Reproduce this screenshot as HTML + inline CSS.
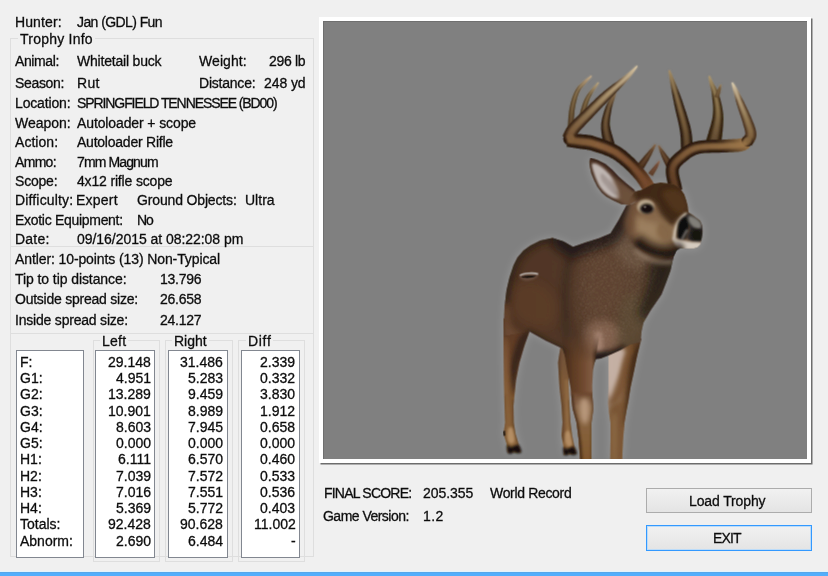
<!DOCTYPE html>
<html lang="en"><head><meta charset="utf-8"><title>Trophy Info</title>
<style>
html,body{margin:0;padding:0;}
body{width:828px;height:576px;overflow:hidden;background:#f0f0f0;font-family:"Liberation Sans",sans-serif;font-size:14px;color:#000;}
#dlg{position:relative;width:828px;height:576px;background:#f0f0f0;overflow:hidden;}
.t{will-change:transform;-webkit-text-stroke:0.3px #151515;position:absolute;white-space:pre;line-height:16px;font-size:14px;color:#0a0a0a;}
.grp{position:absolute;border:1px solid #dedede;box-sizing:border-box;}
.hl{position:absolute;height:1px;background:#dedede;}
.box{position:absolute;background:#fff;border:1px solid #828790;box-sizing:border-box;}
.cap{position:absolute;background:#f0f0f0;}
#frame{position:absolute;left:319px;top:16.5px;width:491.5px;height:446.5px;background:#fff;box-shadow:1.5px 1.5px 0 #6d6d6d;}
#view{position:absolute;left:322.5px;top:20.5px;width:484px;height:438.5px;background:#808080;overflow:hidden;box-shadow:inset 1px 1px 0 #6f6f6f;}
.btn{position:absolute;box-sizing:border-box;border:1px solid #acacac;background:linear-gradient(#f1f1f1,#e4e4e4);}
.btn.def{border-color:#3399ff;box-shadow:inset 0 0 0 1px #bcdcf9;}
#bar{position:absolute;left:0;top:571px;width:828px;height:5px;background:linear-gradient(#e2f3fd 0,#e2f3fd 1px,#56a6ea 1px,#56a6ea 2px,#52aefc 2px);}

</style></head>
<body>
<div id="dlg">
<div class="grp" style="left:10px;top:38px;width:304px;height:519px"></div>
<div class="cap" style="left:18px;top:32px;width:77px;height:14px"></div>
<div class="hl" style="left:11px;top:246px;width:302px"></div>
<div class="hl" style="left:11px;top:333px;width:302px"></div>
<div class="grp" style="left:93px;top:340px;width:67px;height:222px"></div>
<div class="cap" style="left:100px;top:334px;width:28px;height:14px"></div>
<div class="grp" style="left:165px;top:340px;width:68px;height:222px"></div>
<div class="cap" style="left:172px;top:334px;width:37px;height:14px"></div>
<div class="grp" style="left:238px;top:340px;width:67px;height:222px"></div>
<div class="cap" style="left:246px;top:334px;width:27px;height:14px"></div>
<div class="box" style="left:16px;top:350px;width:68px;height:207.5px"></div>
<div class="box" style="left:95px;top:350px;width:60px;height:207.5px"></div>
<div class="box" style="left:168px;top:350px;width:59.5px;height:207.5px"></div>
<div class="box" style="left:241px;top:350px;width:59px;height:207.5px"></div>
<div id="frame"></div>
<div id="view"><svg width="484" height="439" viewBox="322.5 20.5 484 439" style="position:absolute;left:0;top:0">
<defs>
<filter id="b1" filterUnits="userSpaceOnUse" x="322" y="20" width="486" height="441"><feGaussianBlur stdDeviation="1"/></filter>
<filter id="b2" filterUnits="userSpaceOnUse" x="322" y="20" width="486" height="441"><feGaussianBlur stdDeviation="2.2"/></filter>
<filter id="b3" filterUnits="userSpaceOnUse" x="322" y="20" width="486" height="441"><feGaussianBlur stdDeviation="3.2"/></filter>
<filter id="b4" filterUnits="userSpaceOnUse" x="322" y="20" width="486" height="441"><feGaussianBlur stdDeviation="4.5"/></filter>
<filter id="b8" filterUnits="userSpaceOnUse" x="322" y="20" width="486" height="441"><feGaussianBlur stdDeviation="8"/></filter>
<filter id="soft" filterUnits="userSpaceOnUse" x="322" y="20" width="486" height="441"><feGaussianBlur stdDeviation="0.6"/></filter>
<filter id="fur" filterUnits="userSpaceOnUse" x="322" y="20" width="486" height="441"><feTurbulence type="fractalNoise" baseFrequency="0.6" numOctaves="2" seed="4" result="n"/><feColorMatrix in="n" type="matrix" values="0 0 0 0 0.50  0 0 0 0 0.38  0 0 0 0 0.27  1.4 1.4 0 0 -1.3" result="c"/><feGaussianBlur in="SourceAlpha" stdDeviation="7" result="ba"/><feComposite in="c" in2="ba" operator="in"/></filter>
<linearGradient id="g1" gradientUnits="userSpaceOnUse" x1="0" y1="348" x2="0" y2="455"><stop offset="0" stop-color="#6e5038"/><stop offset="0.3" stop-color="#7e5a38"/><stop offset="1" stop-color="#8c643c"/></linearGradient>
<clipPath id="c1"><path d="M560,346 L557.5,362 L559,387 L561,405 L562,422 L561,435 L563,447 L563,454.5 L576,453.5 L574,446 L571.7,435 L570,422 L569,405 L568,380 L568,346Z"/></clipPath>
<linearGradient id="g2" gradientUnits="userSpaceOnUse" x1="0" y1="320" x2="0" y2="450"><stop offset="0" stop-color="#5a3824"/><stop offset="0.3" stop-color="#69442a"/><stop offset="0.6" stop-color="#7c5630"/><stop offset="1" stop-color="#8e683e"/></linearGradient>
<clipPath id="c2"><path d="M503,318 L503,345 L503.5,380 L504,405 L504.7,422 L503,433 L506,443 L507,452.5 L520.5,452 L518,443 L515,433 L513.3,422 L513,405 L515.5,380 L519,362 L524,345 L529,331 L532,318Z"/></clipPath>
<linearGradient id="g3" gradientUnits="userSpaceOnUse" x1="607" y1="0" x2="640" y2="0"><stop offset="0" stop-color="#9a806c"/><stop offset="0.35" stop-color="#8c6a4c"/><stop offset="0.7" stop-color="#74502f"/><stop offset="1" stop-color="#4e3220"/></linearGradient>
<clipPath id="c3"><path d="M608,346 L608,387 L607.5,403 L608.5,412 L610,422 L610,440 L609.7,460 L621.7,460 L622.5,440 L624,422 L626,410 L628,400 L630,387 L633,373 L636.7,355 L641,338Z"/></clipPath>
<linearGradient id="g4" gradientUnits="userSpaceOnUse" x1="503" y1="0" x2="672" y2="0"><stop offset="0" stop-color="#45291a"/><stop offset="0.2" stop-color="#482c1b"/><stop offset="0.4" stop-color="#482e1e"/><stop offset="0.6" stop-color="#4c3220"/><stop offset="0.8" stop-color="#503826"/><stop offset="1" stop-color="#34251a"/></linearGradient>
<clipPath id="c4"><path d="M552,237.5 L563,241 L572.5,246.5 L585,242 L598,238 L610,233 L618,220 L626,205 L650,200 L680,240 L673,256 L670,270 L666,281 L661,294 L650,310 L643,322 L641,331 L640,342 L630,344 L620,349.5 L610,354 L600,358 L595.5,358.5 L591.5,368 L580,370 L568,366 L562,348 L545,340 L529,331 L520,333 L503,336 L504,307 L506,290 L509,277 L513,265 L517,257 L523,250 L530,245 L540,240Z"/></clipPath>
<linearGradient id="mfl" gradientUnits="userSpaceOnUse" x1="0" y1="334" x2="0" y2="362"><stop offset="0" stop-color="#000"/><stop offset="1" stop-color="#fff"/></linearGradient><mask id="mFL" maskUnits="userSpaceOnUse" x="550" y="320" width="60" height="145"><rect x="550" y="320" width="60" height="145" fill="url(#mfl)"/></mask>
<linearGradient id="g5" gradientUnits="userSpaceOnUse" x1="563" y1="0" x2="596" y2="0"><stop offset="0" stop-color="#462a18"/><stop offset="0.3" stop-color="#5e3c24"/><stop offset="0.6" stop-color="#704a30"/><stop offset="0.85" stop-color="#805c42"/><stop offset="1" stop-color="#3e2818"/></linearGradient>
<clipPath id="c5"><path d="M560,330 L563,348 L566.7,370 L570,387 L571,397 L572,408 L576,422 L578,438 L579.7,460 L591,460 L591,438 L591,422 L593,408 L592,397 L591.7,385 L592.5,370 L595,357.5 L600,330Z"/></clipPath>
<linearGradient id="g6" gradientUnits="userSpaceOnUse" x1="0" y1="392" x2="0" y2="460"><stop offset="0" stop-color="#6a462e"/><stop offset="0.2" stop-color="#8a6a4e"/><stop offset="0.6" stop-color="#85603a"/><stop offset="1" stop-color="#80582e"/></linearGradient>
<clipPath id="c6"><path d="M590,157.3 L597,159.5 L605,163.5 L612,169.5 L618,176 L626,183 L634,189.5 L637,198 L629,204.5 L621,203.8 L612.3,199.8 L606,196.3 L601.3,192.3 L596.8,186.3 L593.7,180 L590.8,173 L589.3,166 L588.8,161Z"/></clipPath>
<linearGradient id="g7" gradientUnits="userSpaceOnUse" x1="570" y1="130" x2="591" y2="75.5"><stop offset="0" stop-color="#40301c"/><stop offset="0.7" stop-color="#40301c"/><stop offset="1" stop-color="#c6ae8c"/></linearGradient>
<linearGradient id="g8" gradientUnits="userSpaceOnUse" x1="570" y1="130" x2="591" y2="75.5"><stop offset="0" stop-color="#61482e"/><stop offset="0.5" stop-color="#90764f"/><stop offset="1" stop-color="#c6ae8c"/></linearGradient>
<linearGradient id="g9" gradientUnits="userSpaceOnUse" x1="580" y1="126" x2="598" y2="82"><stop offset="0" stop-color="#40301c"/><stop offset="0.7" stop-color="#40301c"/><stop offset="1" stop-color="#c0aa84"/></linearGradient>
<linearGradient id="g10" gradientUnits="userSpaceOnUse" x1="580" y1="126" x2="598" y2="82"><stop offset="0" stop-color="#61482e"/><stop offset="0.5" stop-color="#90764f"/><stop offset="1" stop-color="#c0aa84"/></linearGradient>
<linearGradient id="g11" gradientUnits="userSpaceOnUse" x1="608.5" y1="144" x2="615" y2="92"><stop offset="0" stop-color="#2a1b10"/><stop offset="0.7" stop-color="#2a1b10"/><stop offset="1" stop-color="#8a7050"/></linearGradient>
<linearGradient id="g12" gradientUnits="userSpaceOnUse" x1="608.5" y1="144" x2="615" y2="92"><stop offset="0" stop-color="#614830"/><stop offset="0.5" stop-color="#7c6140"/><stop offset="1" stop-color="#8a7050"/></linearGradient>
<linearGradient id="g13" gradientUnits="userSpaceOnUse" x1="567" y1="139.5" x2="649" y2="188"><stop offset="0" stop-color="#2c1b10"/><stop offset="0.7" stop-color="#2c1b10"/><stop offset="1" stop-color="#74482c"/></linearGradient>
<linearGradient id="g14" gradientUnits="userSpaceOnUse" x1="567" y1="139.5" x2="649" y2="188"><stop offset="0" stop-color="#805e39"/><stop offset="0.3" stop-color="#90653f"/><stop offset="0.6" stop-color="#825635"/><stop offset="1" stop-color="#74482c"/></linearGradient>
<linearGradient id="g15" gradientUnits="userSpaceOnUse" x1="568" y1="138.5" x2="636.7" y2="65.5"><stop offset="0" stop-color="#3a2618"/><stop offset="0.7" stop-color="#3a2618"/><stop offset="1" stop-color="#dccaa8"/></linearGradient>
<linearGradient id="g16" gradientUnits="userSpaceOnUse" x1="568" y1="138.5" x2="636.7" y2="65.5"><stop offset="0" stop-color="#7b5938"/><stop offset="0.3" stop-color="#907654"/><stop offset="0.6" stop-color="#b49c75"/><stop offset="1" stop-color="#dccaa8"/></linearGradient>
<linearGradient id="g17" gradientUnits="userSpaceOnUse" x1="640" y1="166" x2="655" y2="144"><stop offset="0" stop-color="#3a2416"/><stop offset="0.7" stop-color="#3a2416"/><stop offset="1" stop-color="#8a6a4a"/></linearGradient>
<linearGradient id="g18" gradientUnits="userSpaceOnUse" x1="640" y1="166" x2="655" y2="144"><stop offset="0" stop-color="#543924"/><stop offset="1" stop-color="#8a6a4a"/></linearGradient>
<linearGradient id="g19" gradientUnits="userSpaceOnUse" x1="650" y1="174" x2="659" y2="160.5"><stop offset="0" stop-color="#5a3a28"/><stop offset="0.7" stop-color="#5a3a28"/><stop offset="1" stop-color="#966a52"/></linearGradient>
<linearGradient id="g20" gradientUnits="userSpaceOnUse" x1="650" y1="174" x2="659" y2="160.5"><stop offset="0" stop-color="#61412c"/><stop offset="1" stop-color="#966a52"/></linearGradient>
<linearGradient id="g21" gradientUnits="userSpaceOnUse" x1="670" y1="166" x2="658" y2="145"><stop offset="0" stop-color="#3a2416"/><stop offset="0.7" stop-color="#3a2416"/><stop offset="1" stop-color="#8a6a4a"/></linearGradient>
<linearGradient id="g22" gradientUnits="userSpaceOnUse" x1="670" y1="166" x2="658" y2="145"><stop offset="0" stop-color="#543924"/><stop offset="1" stop-color="#8a6a4a"/></linearGradient>
<linearGradient id="g23" gradientUnits="userSpaceOnUse" x1="686.5" y1="150" x2="668.7" y2="69.7"><stop offset="0" stop-color="#2a1b10"/><stop offset="0.7" stop-color="#2a1b10"/><stop offset="1" stop-color="#a89068"/></linearGradient>
<linearGradient id="g24" gradientUnits="userSpaceOnUse" x1="686.5" y1="150" x2="668.7" y2="69.7"><stop offset="0" stop-color="#61482e"/><stop offset="0.5" stop-color="#876c46"/><stop offset="1" stop-color="#a89068"/></linearGradient>
<linearGradient id="g25" gradientUnits="userSpaceOnUse" x1="713" y1="143" x2="708.7" y2="75.5"><stop offset="0" stop-color="#33220f"/><stop offset="0.7" stop-color="#33220f"/><stop offset="1" stop-color="#b09a70"/></linearGradient>
<linearGradient id="g26" gradientUnits="userSpaceOnUse" x1="713" y1="143" x2="708.7" y2="75.5"><stop offset="0" stop-color="#644c33"/><stop offset="0.5" stop-color="#90784f"/><stop offset="1" stop-color="#b09a70"/></linearGradient>
<linearGradient id="g27" gradientUnits="userSpaceOnUse" x1="716" y1="97" x2="720.3" y2="84"><stop offset="0" stop-color="#5a4028"/><stop offset="0.7" stop-color="#5a4028"/><stop offset="1" stop-color="#a08860"/></linearGradient>
<linearGradient id="g28" gradientUnits="userSpaceOnUse" x1="716" y1="97" x2="720.3" y2="84"><stop offset="0" stop-color="#6e5838"/><stop offset="1" stop-color="#a08860"/></linearGradient>
<linearGradient id="g29" gradientUnits="userSpaceOnUse" x1="675.5" y1="190" x2="747" y2="141.5"><stop offset="0" stop-color="#2c1b10"/><stop offset="0.7" stop-color="#2c1b10"/><stop offset="1" stop-color="#a07a4c"/></linearGradient>
<linearGradient id="g30" gradientUnits="userSpaceOnUse" x1="675.5" y1="190" x2="747" y2="141.5"><stop offset="0" stop-color="#613e26"/><stop offset="0.3" stop-color="#84603c"/><stop offset="1" stop-color="#a07a4c"/></linearGradient>
<linearGradient id="g31" gradientUnits="userSpaceOnUse" x1="746" y1="142.5" x2="731.7" y2="82"><stop offset="0" stop-color="#4a3220"/><stop offset="0.7" stop-color="#4a3220"/><stop offset="1" stop-color="#e0d2b4"/></linearGradient>
<linearGradient id="g32" gradientUnits="userSpaceOnUse" x1="746" y1="142.5" x2="731.7" y2="82"><stop offset="0" stop-color="#80613c"/><stop offset="0.4" stop-color="#9a825b"/><stop offset="0.75" stop-color="#c5b08c"/><stop offset="1" stop-color="#e0d2b4"/></linearGradient>
<linearGradient id="g33" gradientUnits="userSpaceOnUse" x1="622" y1="200" x2="690" y2="240"><stop offset="0" stop-color="#664832"/><stop offset="0.35" stop-color="#846448"/><stop offset="0.7" stop-color="#8e7254"/><stop offset="1" stop-color="#765a42"/></linearGradient>
<mask id="mHead" maskUnits="userSpaceOnUse" x="600" y="170" width="120" height="100"><path d="M626,205 L630,197 L634,191 L641.7,189 L648,185.5 L653,183 L660,182 L666.7,182.5 L674,184 L680,188 L684,194 L686,200 L687.5,206 L688,211.7 L692,214 L696,217 L700,220 L702,225 L702.3,231 L701.7,237 L700.5,241.5 L700,244 L697,247 L693,248.3 L686,248.3 L680,247.8 L676,250 L673,254 L672,258 L660,262 L645,258 L630,245 L620,230 L618,220Z" fill="#fff"/><path d="M628,200 L617,219 L619,231 L629,246 L644,259 L660,264 L674,259" stroke="#000" stroke-width="13" fill="none" stroke-linejoin="round" filter="url(#b3)"/></mask>
<clipPath id="c7"><path d="M626,205 L630,197 L634,191 L641.7,189 L648,185.5 L653,183 L660,182 L666.7,182.5 L674,184 L680,188 L684,194 L686,200 L687.5,206 L688,211.7 L692,214 L696,217 L700,220 L702,225 L702.3,231 L701.7,237 L700.5,241.5 L700,244 L697,247 L693,248.3 L686,248.3 L680,247.8 L676,250 L673,254 L672,258 L660,262 L645,258 L630,245 L620,230 L618,220Z"/></clipPath>
<clipPath id="cHB"><path d="M626,205 L630,197 L634,191 L641.7,189 L648,185.5 L653,183 L660,182 L666.7,182.5 L674,184 L680,188 L684,194 L686,200 L687.5,206 L688,211.7 L692,214 L696,217 L700,220 L702,225 L702.3,231 L701.7,237 L700.5,241.5 L700,244 L697,247 L693,248.3 L686,248.3 L680,247.8 L676,250 L673,254 L672,258 L660,262 L645,258 L630,245 L620,230 L618,220Z"/><path d="M552,237.5 L563,241 L572.5,246.5 L585,242 L598,238 L610,233 L618,220 L626,205 L650,200 L680,240 L673,256 L670,270 L666,281 L661,294 L650,310 L643,322 L641,331 L640,342 L630,344 L620,349.5 L610,354 L600,358 L595.5,358.5 L591.5,368 L580,370 L568,366 L562,348 L545,340 L529,331 L520,333 L503,336 L504,307 L506,290 L509,277 L513,265 L517,257 L523,250 L530,245 L540,240Z"/></clipPath>
</defs>
<g filter="url(#b4)" opacity=".2"><path d="M560,346 L557.5,362 L559,387 L561,405 L562,422 L561,435 L563,447 L563,454.5 L576,453.5 L574,446 L571.7,435 L570,422 L569,405 L568,380 L568,346Z" fill="#fff"/><path d="M503,318 L503,345 L503.5,380 L504,405 L504.7,422 L503,433 L506,443 L507,452.5 L520.5,452 L518,443 L515,433 L513.3,422 L513,405 L515.5,380 L519,362 L524,345 L529,331 L532,318Z" fill="#fff"/><path d="M608,346 L608,387 L607.5,403 L608.5,412 L610,422 L610,440 L609.7,460 L621.7,460 L622.5,440 L624,422 L626,410 L628,400 L630,387 L633,373 L636.7,355 L641,338Z" fill="#fff"/><path d="M552,237.5 L563,241 L572.5,246.5 L585,242 L598,238 L610,233 L618,220 L626,205 L650,200 L680,240 L673,256 L670,270 L666,281 L661,294 L650,310 L643,322 L641,331 L640,342 L630,344 L620,349.5 L610,354 L600,358 L595.5,358.5 L591.5,368 L580,370 L568,366 L562,348 L545,340 L529,331 L520,333 L503,336 L504,307 L506,290 L509,277 L513,265 L517,257 L523,250 L530,245 L540,240Z" fill="#fff"/><path d="M560,330 L563,348 L566.7,370 L570,387 L571,397 L572,408 L576,422 L578,438 L579.7,460 L591,460 L591,438 L591,422 L593,408 L592,397 L591.7,385 L592.5,370 L595,357.5 L600,330Z" fill="#fff"/><path d="M590,157.3 L597,159.5 L605,163.5 L612,169.5 L618,176 L626,183 L634,189.5 L637,198 L629,204.5 L621,203.8 L612.3,199.8 L606,196.3 L601.3,192.3 L596.8,186.3 L593.7,180 L590.8,173 L589.3,166 L588.8,161Z" fill="#fff"/><path d="M626,205 L630,197 L634,191 L641.7,189 L648,185.5 L653,183 L660,182 L666.7,182.5 L674,184 L680,188 L684,194 L686,200 L687.5,206 L688,211.7 L692,214 L696,217 L700,220 L702,225 L702.3,231 L701.7,237 L700.5,241.5 L700,244 L697,247 L693,248.3 L686,248.3 L680,247.8 L676,250 L673,254 L672,258 L660,262 L645,258 L630,245 L620,230 L618,220Z" fill="#fff"/></g>
<g filter="url(#soft)">
<path d="M560,346 L557.5,362 L559,387 L561,405 L562,422 L561,435 L563,447 L563,454.5 L576,453.5 L574,446 L571.7,435 L570,422 L569,405 L568,380 L568,346Z" fill="url(#g1)" />
<g clip-path="url(#c1)">
<path d="M558,350 L559,387 L561.5,405 L562.5,440" stroke="#4e3422" stroke-width="2.5" fill="none" stroke-linecap="round" filter="url(#b1)" opacity=".7"/>
<path d="M566,380 L567,410 L568,436" stroke="#a07a50" stroke-width="2.5" fill="none" stroke-linecap="round" filter="url(#b1)" opacity=".6"/>
<path d="M565.0,432.0 L565.3,431.4 L565.8,430.9 L566.3,430.5 L566.8,430.2 L567.4,430.1 L568.0,430.1 L568.5,430.4 L569.0,431.0 L569.5,431.9 L570.0,433.3 L570.5,434.9 L571.0,436.8 L571.4,438.6 L571.8,440.3 L572.0,441.8 L572.0,443.0 L571.8,443.9 L571.5,444.6 L571.0,445.1 L570.4,445.6 L569.8,445.9 L569.1,446.0 L568.5,446.1 L568.0,446.0 L567.5,445.8 L567.0,445.4 L566.5,444.9 L566.0,444.2 L565.5,443.5 L565.1,442.7 L564.7,441.9 L564.5,441.0 L564.3,440.0 L564.3,438.8 L564.2,437.6 L564.3,436.2 L564.4,435.0 L564.5,433.8 L564.7,432.8Z" fill="#c09a70" filter="url(#b1)" opacity=".75"/>
<path d="M569.5,400 L570.2,422 L572,435 L574.3,446" stroke="#4e341f" stroke-width="1.8" fill="none" stroke-linecap="round" filter="url(#b1)" opacity=".65"/>
</g>
<path d="M563.0,446.5 L563.2,446.5 L563.5,446.7 L563.9,447.0 L564.3,447.3 L564.7,447.7 L565.1,448.1 L565.6,448.4 L566.0,448.5 L566.4,448.5 L566.8,448.5 L567.3,448.3 L567.7,448.2 L568.1,448.0 L568.6,447.8 L569.0,447.6 L569.5,447.5 L570.0,447.3 L570.5,447.1 L571.0,446.8 L571.5,446.6 L572.1,446.4 L572.6,446.3 L573.1,446.3 L573.5,446.5 L573.9,446.9 L574.4,447.6 L574.8,448.4 L575.3,449.3 L575.6,450.2 L576.0,451.1 L576.2,451.9 L576.3,452.5 L576.3,452.9 L576.2,453.3 L576.1,453.6 L575.9,453.8 L575.6,454.0 L575.2,454.1 L574.9,454.2 L574.5,454.3 L574.0,454.4 L573.5,454.4 L572.9,454.4 L572.2,454.4 L571.6,454.3 L571.0,454.2 L570.4,454.1 L570.0,454.0 L569.7,453.8 L569.4,453.5 L569.2,453.2 L569.1,452.8 L569.0,452.5 L568.9,452.2 L568.7,452.0 L568.6,452.0 L568.5,452.1 L568.3,452.4 L568.2,452.8 L568.2,453.2 L568.0,453.6 L567.9,454.0 L567.7,454.4 L567.4,454.6 L567.0,454.7 L566.6,454.8 L566.0,454.9 L565.5,454.9 L564.9,454.8 L564.4,454.7 L563.9,454.5 L563.6,454.3 L563.3,453.9 L563.2,453.5 L563.0,452.9 L563.0,452.3 L562.9,451.7 L562.9,451.1 L562.8,450.5 L562.8,450.0 L562.8,449.5 L562.7,448.9 L562.7,448.4 L562.7,447.9 L562.7,447.4 L562.7,447.0 L562.8,446.7Z" fill="#120e0b" filter="url(#b1)"/>
<path d="M503,318 L503,345 L503.5,380 L504,405 L504.7,422 L503,433 L506,443 L507,452.5 L520.5,452 L518,443 L515,433 L513.3,422 L513,405 L515.5,380 L519,362 L524,345 L529,331 L532,318Z" fill="url(#g2)" />
<g clip-path="url(#c2)">
<path d="M520.0,335.0 L521.3,333.6 L522.9,332.3 L524.7,331.1 L526.4,330.1 L528.1,329.4 L529.5,329.1 L530.5,329.3 L531.0,330.0 L530.9,331.5 L530.3,333.6 L529.3,336.4 L528.1,339.4 L526.7,342.7 L525.3,346.0 L524.0,349.2 L523.0,352.0 L522.1,354.6 L521.3,357.1 L520.5,359.5 L519.7,361.9 L518.9,364.4 L518.2,366.8 L517.6,369.4 L517.0,372.0 L516.5,375.0 L516.1,378.6 L515.7,382.4 L515.4,386.2 L515.1,389.6 L514.8,392.4 L514.4,394.3 L514.0,395.0 L513.5,394.3 L512.9,392.4 L512.3,389.6 L511.6,386.2 L511.0,382.4 L510.5,378.6 L510.2,375.0 L510.0,372.0 L510.0,369.3 L510.2,366.7 L510.4,364.1 L510.8,361.6 L511.3,359.1 L511.8,356.7 L512.4,354.3 L513.0,352.0 L513.7,349.6 L514.4,347.3 L515.2,344.9 L516.0,342.6 L516.9,340.4 L517.9,338.3 L518.9,336.5Z" fill="#33241a" filter="url(#b2)" opacity=".85"/>
<path d="M503.0,345.0 L503.3,340.3 L503.8,337.4 L504.3,336.0 L504.9,335.9 L505.5,337.0 L506.1,339.0 L506.6,341.8 L507.0,345.0 L507.3,349.4 L507.5,355.4 L507.7,362.5 L507.8,370.3 L507.9,378.4 L508.0,386.4 L508.0,393.7 L508.0,400.0 L508.0,405.6 L508.0,411.0 L507.9,416.1 L507.8,420.9 L507.7,425.3 L507.5,429.2 L507.3,432.4 L507.0,435.0 L506.6,437.3 L506.1,439.6 L505.5,441.5 L504.9,442.8 L504.3,443.1 L503.8,442.1 L503.3,439.5 L503.0,435.0 L502.8,427.4 L502.6,416.7 L502.5,403.9 L502.5,390.0 L502.5,376.1 L502.6,363.3 L502.8,352.6Z" fill="#936a44" filter="url(#b2)" opacity=".6"/>
<path d="M513.6,400 L513.4,422 L515.2,433 L518.5,443" stroke="#4e341f" stroke-width="2.2" fill="none" stroke-linecap="round" filter="url(#b1)" opacity=".75"/>
<path d="M503.8,395 L504.6,422 L503.4,433 L506.5,443" stroke="#5a3c24" stroke-width="1.6" fill="none" stroke-linecap="round" filter="url(#b1)" opacity=".6"/>
<path d="M508.0,428.0 L508.4,427.4 L508.8,427.0 L509.4,426.7 L509.9,426.6 L510.5,426.7 L511.1,426.9 L511.6,427.4 L512.0,428.0 L512.4,429.0 L512.8,430.4 L513.2,432.0 L513.5,433.8 L513.8,435.6 L514.0,437.4 L514.1,438.8 L514.0,440.0 L513.8,440.9 L513.4,441.6 L512.9,442.1 L512.3,442.6 L511.7,442.9 L511.1,443.0 L510.5,443.1 L510.0,443.0 L509.5,442.8 L509.1,442.4 L508.6,441.9 L508.2,441.3 L507.8,440.6 L507.4,439.8 L507.2,438.9 L507.0,438.0 L506.9,436.9 L506.9,435.6 L507.0,434.2 L507.1,432.7 L507.2,431.2 L507.4,429.9 L507.7,428.8Z" fill="#c09a70" filter="url(#b1)" opacity=".8"/>
</g>
<path d="M506.8,444.5 L507.1,444.5 L507.4,444.6 L507.7,444.9 L508.2,445.3 L508.6,445.7 L509.1,446.1 L509.5,446.4 L510.0,446.5 L510.5,446.5 L510.9,446.5 L511.4,446.4 L511.9,446.2 L512.5,446.0 L513.0,445.8 L513.5,445.7 L514.0,445.5 L514.5,445.3 L515.0,445.0 L515.6,444.7 L516.1,444.5 L516.6,444.2 L517.1,444.1 L517.6,444.1 L518.0,444.3 L518.4,444.7 L518.9,445.4 L519.3,446.3 L519.7,447.2 L520.1,448.2 L520.4,449.1 L520.7,449.9 L520.8,450.5 L520.8,451.0 L520.8,451.4 L520.7,451.7 L520.5,452.0 L520.3,452.2 L520.0,452.3 L519.7,452.5 L519.3,452.6 L518.8,452.7 L518.2,452.7 L517.6,452.7 L516.9,452.7 L516.2,452.6 L515.5,452.5 L515.0,452.3 L514.5,452.2 L514.2,452.0 L513.9,451.7 L513.8,451.4 L513.6,451.0 L513.5,450.7 L513.5,450.4 L513.3,450.2 L513.2,450.2 L513.0,450.3 L512.9,450.6 L512.8,451.0 L512.7,451.5 L512.5,452.0 L512.3,452.4 L512.1,452.8 L511.8,453.0 L511.4,453.1 L510.9,453.3 L510.4,453.3 L509.8,453.3 L509.2,453.3 L508.7,453.2 L508.2,453.0 L507.8,452.8 L507.5,452.5 L507.3,452.0 L507.1,451.5 L506.9,450.9 L506.8,450.3 L506.7,449.7 L506.7,449.1 L506.6,448.5 L506.5,447.9 L506.5,447.3 L506.4,446.7 L506.4,446.1 L506.4,445.5 L506.5,445.1 L506.6,444.7Z" fill="#120e0b" filter="url(#b1)"/>
<path d="M502.3,431 L504.5,430 L505,435 L503,435.5Z" fill="#2a1e16" />
<path d="M608,346 L608,387 L607.5,403 L608.5,412 L610,422 L610,440 L609.7,460 L621.7,460 L622.5,440 L624,422 L626,410 L628,400 L630,387 L633,373 L636.7,355 L641,338Z" fill="url(#g3)" />
<g clip-path="url(#c3)">
<path d="M606.0,350.0 L607.0,348.0 L608.3,346.8 L609.8,346.2 L611.6,346.0 L613.3,346.1 L615.1,346.4 L616.7,346.8 L618.0,347.0 L619.2,347.2 L620.4,347.4 L621.5,347.8 L622.5,348.3 L623.4,349.0 L624.1,349.8 L624.7,350.8 L625.0,352.0 L625.0,353.5 L624.8,355.2 L624.4,357.1 L623.9,359.2 L623.2,361.4 L622.5,363.6 L621.7,365.8 L621.0,368.0 L620.3,370.2 L619.4,372.5 L618.5,374.9 L617.6,377.2 L616.6,379.6 L615.7,381.9 L614.8,384.0 L614.0,386.0 L613.3,388.0 L612.6,390.0 L611.9,392.0 L611.2,393.9 L610.6,395.6 L610.1,396.9 L609.5,397.7 L609.0,398.0 L608.5,397.7 L608.0,397.0 L607.6,395.9 L607.2,394.4 L606.8,392.6 L606.5,390.4 L606.2,387.8 L606.0,385.0 L605.8,381.5 L605.5,377.0 L605.3,372.1 L605.1,366.9 L605.0,361.7 L605.1,357.0 L605.4,353.0Z" fill="#c8b4a8" filter="url(#b2)" opacity=".95"/>
<path d="M624.0,356.0 L625.2,354.0 L626.5,352.3 L628.1,350.9 L629.6,349.9 L631.1,349.2 L632.4,349.0 L633.4,349.3 L634.0,350.0 L634.2,351.4 L634.1,353.6 L633.7,356.3 L633.1,359.4 L632.4,362.7 L631.6,366.0 L630.8,369.2 L630.0,372.0 L629.2,374.7 L628.3,377.3 L627.3,380.0 L626.3,382.6 L625.2,385.2 L624.2,387.6 L623.1,389.9 L622.0,392.0 L620.9,394.0 L619.7,395.9 L618.4,397.8 L617.2,399.5 L616.0,401.0 L614.9,402.3 L613.8,403.3 L613.0,404.0 L612.3,404.3 L611.6,404.4 L611.0,404.2 L610.4,403.8 L610.1,403.1 L609.8,402.2 L609.8,401.2 L610.0,400.0 L610.5,398.7 L611.3,397.1 L612.3,395.4 L613.4,393.5 L614.7,391.4 L615.9,389.1 L617.0,386.7 L618.0,384.0 L618.8,380.9 L619.5,377.3 L620.2,373.4 L620.9,369.4 L621.5,365.4 L622.3,361.7 L623.1,358.5Z" fill="#7a5434" filter="url(#b2)" opacity=".9"/>
<path d="M608.0,412.0 L608.8,408.8 L609.8,406.4 L611.0,404.8 L612.4,403.8 L613.8,403.1 L615.3,402.7 L616.7,402.4 L618.0,402.0 L619.3,401.5 L620.8,401.0 L622.4,400.6 L623.9,400.4 L625.3,400.6 L626.5,401.2 L627.4,402.3 L628.0,404.0 L628.2,406.5 L627.9,409.8 L627.4,413.7 L626.8,417.9 L626.0,422.4 L625.2,426.9 L624.5,431.1 L624.0,435.0 L623.7,438.8 L623.6,442.7 L623.6,446.6 L623.6,450.4 L623.5,454.0 L623.3,457.2 L622.8,459.9 L622.0,462.0 L620.7,463.6 L619.0,465.1 L617.0,466.2 L614.9,466.8 L612.8,466.8 L610.8,466.1 L609.2,464.6 L608.0,462.0 L607.3,457.9 L606.8,452.1 L606.5,445.2 L606.5,437.6 L606.7,430.0 L607.0,422.9 L607.4,416.7Z" fill="#7a5634" filter="url(#b2)" opacity=".95"/>
<path d="M611.0,420.0 L611.4,417.4 L611.9,415.3 L612.7,413.8 L613.4,412.8 L614.2,412.4 L615.0,412.8 L615.6,414.0 L616.0,416.0 L616.3,419.5 L616.4,424.7 L616.5,430.9 L616.6,437.8 L616.5,444.6 L616.4,451.0 L616.2,456.3 L616.0,460.0 L615.7,462.4 L615.2,464.0 L614.7,465.0 L614.1,465.2 L613.5,464.9 L612.9,463.8 L612.4,462.2 L612.0,460.0 L611.7,456.7 L611.4,452.0 L611.1,446.3 L610.9,440.2 L610.8,434.1 L610.8,428.4 L610.8,423.6Z" fill="#92704a" filter="url(#b2)" opacity=".7"/>
<path d="M630.0,360.0 L631.3,355.6 L632.9,351.9 L634.6,348.9 L636.4,346.6 L638.1,345.0 L639.7,344.2 L641.0,344.2 L642.0,345.0 L642.7,346.9 L643.2,350.1 L643.5,354.2 L643.6,359.1 L643.6,364.3 L643.3,369.7 L642.8,375.0 L642.0,380.0 L640.9,385.0 L639.2,390.6 L637.3,396.4 L635.2,402.2 L633.1,407.7 L631.1,412.7 L629.4,416.9 L628.0,420.0 L627.0,422.3 L626.1,424.2 L625.3,425.6 L624.8,426.2 L624.3,426.2 L624.1,425.2 L624.0,423.1 L624.0,420.0 L624.2,415.1 L624.7,408.2 L625.3,399.9 L626.0,390.9 L626.9,381.8 L627.8,373.2 L628.9,365.8Z" fill="#3e2818" filter="url(#b2)" opacity=".8"/>
</g>
<path d="M552,237.5 L563,241 L572.5,246.5 L585,242 L598,238 L610,233 L618,220 L626,205 L650,200 L680,240 L673,256 L670,270 L666,281 L661,294 L650,310 L643,322 L641,331 L640,342 L630,344 L620,349.5 L610,354 L600,358 L595.5,358.5 L591.5,368 L580,370 L568,366 L562,348 L545,340 L529,331 L520,333 L503,336 L504,307 L506,290 L509,277 L513,265 L517,257 L523,250 L530,245 L540,240Z" fill="url(#g4)"/>
<g clip-path="url(#c4)">
<path d="M506,300 L509,277 L513,265 L517,257 L523,250 L530,245 L540,240 L552,237.5 L563,241 L572.5,246.5" stroke="#24160e" stroke-width="9" fill="none" stroke-linecap="round" filter="url(#b3)" opacity=".8"/>
<path d="M574,244 C566,262 562,290 566,335" stroke="#2c1c12" stroke-width="6" fill="none" stroke-linecap="round" filter="url(#b3)" opacity=".7"/>
<path d="M515.0,285.0 L517.1,283.3 L519.9,282.1 L523.2,281.2 L526.7,280.7 L530.3,280.5 L533.9,280.7 L537.2,281.2 L540.0,282.0 L542.6,283.2 L545.1,284.9 L547.5,286.9 L549.8,289.2 L551.9,291.8 L553.6,294.5 L555.0,297.3 L556.0,300.0 L556.6,303.0 L556.8,306.3 L556.8,309.9 L556.4,313.6 L555.7,317.1 L554.7,320.3 L553.5,323.0 L552.0,325.0 L550.1,326.4 L547.7,327.3 L544.9,327.8 L541.9,327.9 L538.7,327.8 L535.6,327.4 L532.7,326.8 L530.0,326.0 L527.4,325.1 L524.7,323.9 L522.0,322.4 L519.4,320.8 L517.0,318.9 L514.9,316.8 L513.2,314.5 L512.0,312.0 L511.2,309.1 L510.8,305.6 L510.6,301.8 L510.8,297.8 L511.3,293.9 L512.2,290.4 L513.4,287.3Z" fill="#56341f" filter="url(#b4)" opacity=".7"/>
<path d="M585.0,252.0 L587.5,249.5 L590.6,247.5 L594.1,246.1 L597.8,245.1 L601.7,244.6 L605.4,244.6 L608.9,245.1 L612.0,246.0 L614.8,247.5 L617.7,249.6 L620.5,252.3 L623.1,255.4 L625.4,258.9 L627.4,262.5 L629.0,266.3 L630.0,270.0 L630.5,273.9 L630.5,278.2 L630.0,282.8 L629.2,287.4 L628.2,292.1 L626.9,296.7 L625.5,301.0 L624.0,305.0 L622.3,308.8 L620.3,312.7 L618.1,316.4 L615.8,320.0 L613.3,323.3 L610.8,326.1 L608.3,328.4 L606.0,330.0 L603.7,331.0 L601.3,331.6 L598.9,331.6 L596.5,331.2 L594.2,330.4 L591.9,329.1 L589.9,327.3 L588.0,325.0 L586.3,322.1 L584.5,318.4 L582.9,314.2 L581.4,309.6 L580.2,304.7 L579.1,299.7 L578.4,294.7 L578.0,290.0 L577.9,285.2 L578.1,280.0 L578.5,274.6 L579.2,269.2 L580.2,264.0 L581.4,259.3 L583.1,255.2Z" fill="#5a3e2a" filter="url(#b8)" opacity=".7"/>
<path d="M590.0,322.0 L592.1,321.0 L594.7,320.4 L597.6,320.1 L600.8,320.1 L603.9,320.3 L607.0,320.7 L609.7,321.3 L612.0,322.0 L614.0,323.0 L615.8,324.3 L617.5,325.8 L619.0,327.6 L620.2,329.4 L621.2,331.3 L621.8,333.2 L622.0,335.0 L621.8,336.9 L621.1,338.9 L620.1,341.0 L618.8,343.1 L617.2,345.1 L615.5,347.0 L613.8,348.6 L612.0,350.0 L610.1,351.1 L607.9,352.2 L605.5,353.1 L603.0,353.8 L600.5,354.3 L598.1,354.5 L595.9,354.4 L594.0,354.0 L592.3,353.1 L590.6,351.9 L589.0,350.2 L587.5,348.4 L586.2,346.3 L585.2,344.2 L584.4,342.1 L584.0,340.0 L583.9,337.8 L584.0,335.4 L584.4,332.8 L585.0,330.1 L585.9,327.6 L587.0,325.3 L588.4,323.4Z" fill="#866450" filter="url(#b4)" opacity=".8"/>
<path d="M594.0,334.0 L594.5,332.8 L595.3,331.9 L596.2,331.2 L597.3,330.8 L598.4,330.6 L599.5,330.7 L600.4,331.2 L601.0,332.0 L601.5,333.4 L601.8,335.5 L602.1,338.0 L602.3,340.8 L602.4,343.5 L602.4,346.2 L602.3,348.4 L602.0,350.0 L601.6,351.2 L600.9,352.1 L600.1,352.8 L599.2,353.2 L598.3,353.4 L597.4,353.3 L596.6,352.8 L596.0,352.0 L595.5,350.6 L595.0,348.5 L594.6,346.0 L594.2,343.2 L593.9,340.5 L593.8,337.8 L593.8,335.6Z" fill="#b08c7a" filter="url(#b2)" opacity=".7"/>
<path d="M622.0,300.0 L623.7,297.4 L625.8,295.6 L628.3,294.5 L630.9,294.1 L633.5,294.2 L636.0,294.6 L638.2,295.3 L640.0,296.0 L641.4,296.9 L642.7,298.3 L643.7,299.9 L644.6,301.9 L645.3,304.1 L645.8,306.5 L646.0,309.2 L646.0,312.0 L645.8,315.3 L645.3,319.1 L644.6,323.4 L643.6,327.8 L642.5,332.0 L641.2,336.0 L639.7,339.4 L638.0,342.0 L635.9,344.1 L633.3,346.0 L630.3,347.6 L627.2,348.8 L624.3,349.3 L621.6,349.1 L619.4,348.1 L618.0,346.0 L617.3,342.4 L617.0,337.0 L617.1,330.6 L617.6,323.5 L618.4,316.4 L619.5,309.7 L620.7,304.1Z" fill="#54462f" filter="url(#b4)" opacity=".6"/>
<path d="M620.0,222.0 L622.2,222.0 L624.9,223.0 L627.9,224.7 L631.1,227.0 L634.3,229.7 L637.3,232.5 L639.9,235.3 L642.0,238.0 L643.7,240.7 L645.2,243.9 L646.5,247.2 L647.5,250.6 L648.2,254.0 L648.6,257.1 L648.5,259.8 L648.0,262.0 L646.9,263.8 L645.2,265.4 L643.0,266.8 L640.5,267.9 L637.8,268.6 L635.1,268.9 L632.4,268.7 L630.0,268.0 L627.6,266.6 L624.9,264.5 L622.1,261.9 L619.4,258.9 L616.8,255.6 L614.7,252.3 L613.0,249.0 L612.0,246.0 L611.7,242.8 L611.8,239.2 L612.5,235.4 L613.5,231.6 L614.8,228.2 L616.4,225.2 L618.2,223.1Z" fill="#6a5240" filter="url(#b4)" opacity=".7"/>
<path d="M634.0,236.0 L635.0,235.6 L636.5,235.9 L638.5,236.7 L640.6,237.9 L642.8,239.3 L644.9,240.9 L646.7,242.5 L648.0,244.0 L648.9,245.6 L649.7,247.5 L650.2,249.5 L650.6,251.6 L650.8,253.7 L650.8,255.5 L650.5,257.0 L650.0,258.0 L649.1,258.6 L647.8,259.0 L646.2,259.2 L644.4,259.1 L642.5,258.8 L640.8,258.1 L639.2,257.2 L638.0,256.0 L637.0,254.2 L636.0,251.6 L635.1,248.6 L634.4,245.4 L633.8,242.2 L633.5,239.5 L633.6,237.3Z" fill="#7e6a56" filter="url(#b3)" opacity=".5"/>
<path d="M678.0,256.0 L678.9,256.6 L679.0,257.6 L678.4,259.0 L677.5,260.6 L676.3,262.4 L675.0,264.3 L673.9,266.2 L673.0,268.0 L672.3,269.8 L671.7,271.7 L671.0,273.6 L670.3,275.6 L669.6,277.7 L668.8,279.8 L667.9,281.9 L667.0,284.0 L665.9,286.2 L664.8,288.4 L663.6,290.7 L662.3,293.0 L661.0,295.3 L659.7,297.6 L658.3,299.8 L657.0,302.0 L655.7,304.2 L654.2,306.7 L652.8,309.1 L651.4,311.5 L649.9,313.7 L648.6,315.6 L647.2,317.1 L646.0,318.0 L644.7,318.4 L643.4,318.4 L642.1,318.1 L640.8,317.4 L639.7,316.4 L638.8,315.1 L638.2,313.7 L638.0,312.0 L638.3,310.0 L639.0,307.5 L640.0,304.7 L641.2,301.8 L642.6,298.7 L643.9,295.6 L645.1,292.7 L646.0,290.0 L646.7,287.5 L647.3,285.0 L647.9,282.6 L648.4,280.2 L648.8,278.0 L649.2,275.8 L649.6,273.8 L650.0,272.0 L650.2,270.3 L650.1,268.8 L649.8,267.5 L649.6,266.2 L649.6,265.1 L649.9,264.0 L650.6,263.0 L652.0,262.0 L654.3,260.9 L657.5,259.8 L661.4,258.7 L665.4,257.6 L669.5,256.8 L673.1,256.1 L676.1,255.9Z" fill="#1a120c" filter="url(#b4)" opacity=".9"/>
<path d="M638.0,236.0 L637.8,237.3 L638.5,238.9 L639.7,240.5 L641.5,242.1 L643.6,243.8 L645.8,245.3 L648.0,246.8 L650.0,248.0 L652.0,249.1 L654.2,250.2 L656.5,251.1 L658.9,252.0 L661.3,252.7 L663.6,253.3 L665.9,253.8 L668.0,254.0 L670.0,254.0 L672.1,253.9 L674.1,253.7 L676.0,253.2 L677.8,252.7 L679.4,251.9 L680.9,251.0 L682.0,250.0 L683.0,248.7 L684.0,247.1 L684.8,245.2 L685.4,243.2 L685.7,241.2 L685.6,239.3 L685.1,237.5 L684.0,236.0 L682.2,234.6 L679.8,233.2 L676.8,231.9 L673.5,230.6 L670.0,229.6 L666.5,228.7 L663.1,228.2 L660.0,228.0 L656.9,228.2 L653.6,228.8 L650.1,229.7 L646.8,230.8 L643.7,232.0 L641.1,233.3 L639.1,234.7Z" fill="#1e140d" filter="url(#b3)" opacity=".85"/>
<path d="M594.0,353.0 L595.3,352.3 L597.2,351.8 L599.5,351.5 L602.1,351.2 L604.8,351.0 L607.5,350.7 L609.9,350.4 L612.0,350.0 L613.9,349.3 L615.9,348.4 L617.8,347.4 L619.6,346.4 L621.2,345.6 L622.5,345.0 L623.5,344.7 L624.0,345.0 L624.0,345.9 L623.7,347.4 L623.0,349.3 L622.0,351.4 L620.8,353.6 L619.3,355.8 L617.7,357.6 L616.0,359.0 L614.0,360.1 L611.4,361.0 L608.6,361.8 L605.6,362.5 L602.7,363.0 L600.0,363.2 L597.7,363.2 L596.0,363.0 L594.8,362.4 L593.8,361.3 L593.1,360.0 L592.6,358.4 L592.5,356.9 L592.7,355.3 L593.2,354.0Z" fill="#140e0a" filter="url(#b2)" opacity=".95"/>
<path d="M529,332 L545,341 L560,348 L566,353" stroke="#1e120a" stroke-width="5" fill="none" stroke-linecap="round" filter="url(#b2)" opacity=".75"/>
<path d="M503.0,305.0 L503.3,303.2 L503.7,302.1 L504.2,301.6 L504.8,301.6 L505.3,302.0 L505.9,302.8 L506.5,303.8 L507.0,305.0 L507.5,306.6 L507.9,308.9 L508.3,311.5 L508.7,314.4 L509.1,317.4 L509.6,320.3 L510.3,322.9 L511.0,325.0 L512.1,326.7 L513.5,328.1 L515.2,329.3 L516.8,330.4 L518.3,331.3 L519.5,332.2 L520.1,333.1 L520.0,334.0 L519.0,335.2 L517.2,336.7 L514.8,338.3 L512.1,339.8 L509.3,340.9 L506.7,341.5 L504.5,341.2 L503.0,340.0 L502.2,337.3 L501.7,333.3 L501.6,328.3 L501.7,322.9 L502.0,317.4 L502.3,312.2 L502.7,308.0Z" fill="#6e4a2e" filter="url(#b3)" opacity=".7"/>
<path d="M563,241 L572.5,246.5 L585,242 L598,238 L610,233 L618,220 L626,205" stroke="#160e09" stroke-width="22" fill="none" stroke-linecap="round" filter="url(#b4)" opacity=".85"/>
<path d="M582.0,250.0 L585.0,246.8 L588.7,244.0 L592.9,241.7 L597.4,239.7 L602.1,238.1 L606.7,236.8 L611.1,235.7 L615.0,235.0 L618.6,234.5 L622.0,234.3 L625.4,234.3 L628.6,234.7 L631.7,235.4 L634.6,236.5 L637.4,238.0 L640.0,240.0 L642.5,242.5 L645.0,245.6 L647.5,249.2 L649.7,253.1 L651.6,257.3 L653.2,261.6 L654.4,265.8 L655.0,270.0 L655.0,274.2 L654.4,278.5 L653.3,283.0 L651.9,287.5 L650.2,292.0 L648.4,296.5 L646.7,300.8 L645.0,305.0 L643.5,309.1 L642.0,313.2 L640.4,317.4 L638.8,321.4 L636.9,325.2 L634.9,328.8 L632.6,332.1 L630.0,335.0 L626.9,337.7 L623.3,340.2 L619.4,342.5 L615.3,344.5 L611.2,346.1 L607.1,347.3 L603.4,348.0 L600.0,348.0 L596.9,347.4 L594.0,346.2 L591.2,344.5 L588.5,342.3 L586.0,339.7 L583.8,336.8 L581.8,333.5 L580.0,330.0 L578.5,326.1 L577.2,321.5 L576.1,316.6 L575.2,311.4 L574.6,306.0 L574.2,300.5 L574.0,295.2 L574.0,290.0 L574.2,284.8 L574.4,279.4 L574.9,273.9 L575.6,268.4 L576.6,263.2 L577.9,258.2 L579.7,253.8Z" fill="#000" filter="url(#fur)" opacity=".28"/>
<path d="M632.0,200.0 L633.5,198.1 L635.3,196.3 L637.4,194.6 L639.6,193.2 L642.0,192.1 L644.6,191.5 L647.3,191.4 L650.0,192.0 L653.1,193.3 L656.6,195.3 L660.5,197.9 L664.4,200.9 L668.1,204.3 L671.4,207.8 L674.1,211.4 L676.0,215.0 L677.0,218.9 L677.5,223.3 L677.4,228.1 L676.9,232.9 L676.0,237.6 L674.8,241.8 L673.5,245.4 L672.0,248.0 L670.2,249.6 L668.0,250.6 L665.4,250.9 L662.6,250.7 L659.8,250.2 L657.0,249.5 L654.3,248.7 L652.0,248.0 L649.9,247.3 L648.0,246.3 L646.1,245.2 L644.4,244.0 L642.7,242.6 L641.1,241.2 L639.5,239.6 L638.0,238.0 L636.5,236.3 L634.9,234.6 L633.3,232.7 L631.9,230.8 L630.5,228.7 L629.4,226.6 L628.6,224.3 L628.0,222.0 L627.7,219.4 L627.7,216.6 L627.9,213.6 L628.2,210.5 L628.9,207.5 L629.7,204.7 L630.7,202.1Z" fill="#7e6044" filter="url(#b3)" opacity=".9"/>
<path d="M634,238 C642,248 656,254 668,254 C674,253.5 678,251 681,248" stroke="#1a110b" stroke-width="6.5" fill="none" stroke-linecap="round" filter="url(#b2)" opacity=".9"/>
<path d="M636,250 C646,259 658,263 671,261" stroke="#8e7864" stroke-width="4.5" fill="none" stroke-linecap="round" filter="url(#b2)" opacity=".75"/>
<path d="M552,237.5 L563,241 L572.5,246.5 L585,242 L598,238 L610,233 L618,220 L626,205 L650,200 L680,240 L673,256 L670,270 L666,281 L661,294 L650,310 L643,322 L641,331 L640,342 L630,344 L620,349.5 L610,354 L600,358 L595.5,358.5 L591.5,368 L580,370 L568,366 L562,348 L545,340 L529,331 L520,333 L503,336 L504,307 L506,290 L509,277 L513,265 L517,257 L523,250 L530,245 L540,240Z" fill="#d8c8b8" opacity=".07"/>
</g>
<path d="M518.4,275.6 C521,272.4 534,271.4 538.2,273.6 C537,277.8 531,280.2 526,280 C522,279.8 519.2,278.2 518.4,275.6 Z" fill="#6e5446" filter="url(#b1)" opacity=".9"/>
<path d="M519.5,275 C523,272.6 533,271.8 537.6,273.6" stroke="#b4aca6" stroke-width="1.7" fill="none"/>
<path d="M520.5,276.6 C524,275.2 532,274.8 535.8,275.6 C533,277.6 524,278.2 520.5,276.6 Z" fill="#140d09"/>
<g mask="url(#mFL)">
<path d="M560,330 L563,348 L566.7,370 L570,387 L571,397 L572,408 L576,422 L578,438 L579.7,460 L591,460 L591,438 L591,422 L593,408 L592,397 L591.7,385 L592.5,370 L595,357.5 L600,330Z" fill="url(#g5)" />
<g clip-path="url(#c5)">
<path d="M565,392 L598,392 L598,462 L572,462Z" fill="url(#g6)" filter="url(#b1)"/>
<path d="M580.0,400.0 L580.6,399.1 L581.4,398.4 L582.3,397.9 L583.4,397.7 L584.4,397.7 L585.4,397.9 L586.3,398.4 L587.0,399.0 L587.5,400.0 L588.0,401.3 L588.4,402.9 L588.7,404.7 L588.9,406.6 L589.0,408.5 L589.1,410.3 L589.0,412.0 L588.8,413.7 L588.4,415.5 L588.0,417.5 L587.4,419.3 L586.8,421.0 L586.2,422.4 L585.6,423.5 L585.0,424.0 L584.4,424.0 L583.7,423.6 L583.0,422.8 L582.2,421.8 L581.6,420.5 L580.9,419.0 L580.4,417.5 L580.0,416.0 L579.7,414.3 L579.5,412.2 L579.3,409.9 L579.2,407.6 L579.3,405.3 L579.4,403.1 L579.6,401.3Z" fill="#bc9c80" filter="url(#b2)" opacity=".9"/>
<path d="M571,395 L573,410 L577,425 L579.5,445 L580.5,462" stroke="#3a2414" stroke-width="3" fill="none" stroke-linecap="round" filter="url(#b1)" opacity=".8"/>
<path d="M592.5,395 L593,408 L591.5,425 L591.5,462" stroke="#46301c" stroke-width="2" fill="none" stroke-linecap="round" filter="url(#b1)" opacity=".7"/>
</g>
</g>
<path d="M590,157.3 L597,159.5 L605,163.5 L612,169.5 L618,176 L626,183 L634,189.5 L637,198 L629,204.5 L621,203.8 L612.3,199.8 L606,196.3 L601.3,192.3 L596.8,186.3 L593.7,180 L590.8,173 L589.3,166 L588.8,161Z" fill="#553c2e" />
<g clip-path="url(#c6)">
<path d="M591.5,163.5 L591.8,163.3 L592.2,163.1 L592.7,163.0 L593.3,163.0 L593.9,163.0 L594.6,163.1 L595.3,163.3 L596.0,163.5 L596.8,163.8 L597.6,164.2 L598.4,164.7 L599.3,165.3 L600.3,165.9 L601.2,166.6 L602.1,167.3 L603.0,168.0 L603.9,168.7 L604.8,169.6 L605.7,170.4 L606.6,171.3 L607.4,172.2 L608.3,173.1 L609.2,174.1 L610.0,175.0 L610.8,176.0 L611.6,176.9 L612.4,177.9 L613.2,178.9 L614.0,180.0 L614.7,181.0 L615.4,182.0 L616.0,183.0 L616.6,184.0 L617.1,185.0 L617.6,186.0 L618.1,187.1 L618.5,188.1 L618.9,189.1 L619.2,190.0 L619.5,191.0 L619.8,192.0 L620.0,193.0 L620.2,194.0 L620.4,195.0 L620.5,196.0 L620.5,196.8 L620.3,197.5 L620.0,198.0 L619.5,198.3 L618.8,198.5 L617.9,198.5 L617.0,198.4 L616.0,198.3 L614.9,198.0 L613.9,197.8 L613.0,197.5 L612.1,197.2 L611.2,196.8 L610.3,196.3 L609.4,195.8 L608.5,195.3 L607.6,194.7 L606.8,194.1 L606.0,193.5 L605.2,192.9 L604.5,192.3 L603.8,191.6 L603.1,190.9 L602.4,190.2 L601.7,189.5 L601.1,188.8 L600.5,188.0 L599.9,187.2 L599.4,186.4 L598.8,185.5 L598.3,184.7 L597.9,183.8 L597.4,182.9 L596.9,181.9 L596.5,181.0 L596.1,180.0 L595.7,179.0 L595.3,178.0 L594.9,176.9 L594.5,175.9 L594.2,174.9 L593.8,173.9 L593.5,173.0 L593.2,172.1 L592.9,171.3 L592.6,170.5 L592.3,169.7 L592.1,169.0 L591.8,168.3 L591.6,167.6 L591.5,167.0 L591.4,166.4 L591.3,165.9 L591.2,165.4 L591.1,164.9 L591.1,164.4 L591.1,164.1 L591.3,163.8Z" fill="#bfb6b2" filter="url(#b1)"/>
<path d="M601.0,173.0 L601.5,173.1 L602.3,173.6 L603.2,174.3 L604.1,175.1 L605.1,176.1 L606.2,177.1 L607.1,178.1 L608.0,179.0 L608.8,179.9 L609.6,180.8 L610.4,181.7 L611.2,182.7 L611.9,183.6 L612.7,184.6 L613.4,185.6 L614.0,186.5 L614.7,187.5 L615.4,188.6 L616.1,189.7 L616.7,190.8 L617.3,191.8 L617.7,192.7 L618.0,193.5 L618.0,194.0 L617.8,194.3 L617.3,194.5 L616.7,194.5 L615.9,194.4 L615.1,194.2 L614.2,193.9 L613.3,193.5 L612.5,193.0 L611.7,192.4 L610.9,191.7 L610.1,190.8 L609.2,189.8 L608.4,188.9 L607.5,187.9 L606.7,186.9 L606.0,186.0 L605.3,185.2 L604.5,184.3 L603.8,183.5 L603.1,182.7 L602.4,181.9 L601.9,181.1 L601.4,180.3 L601.0,179.5 L600.7,178.6 L600.5,177.6 L600.3,176.5 L600.2,175.5 L600.3,174.5 L600.4,173.7 L600.6,173.2Z" fill="#9c908c" filter="url(#b1)" opacity=".8"/>
<path d="M612.0,178.0 L612.7,178.0 L613.8,178.4 L615.3,179.3 L616.9,180.4 L618.8,181.6 L620.6,182.9 L622.4,184.0 L624.0,185.0 L625.6,185.8 L627.2,186.5 L628.9,187.2 L630.6,187.9 L632.2,188.6 L633.6,189.3 L634.9,190.1 L636.0,191.0 L636.9,192.0 L637.7,193.1 L638.4,194.3 L638.9,195.5 L639.3,196.7 L639.4,197.9 L639.4,199.0 L639.0,200.0 L638.3,201.0 L637.2,201.9 L635.9,202.9 L634.3,203.8 L632.7,204.6 L631.0,205.3 L629.4,205.7 L628.0,206.0 L626.6,206.0 L625.2,205.9 L623.8,205.6 L622.4,205.1 L621.0,204.5 L619.8,203.8 L618.8,203.0 L618.0,202.0 L617.5,200.9 L617.2,199.6 L617.1,198.1 L617.2,196.5 L617.3,194.9 L617.3,193.2 L617.3,191.6 L617.0,190.0 L616.5,188.4 L615.6,186.6 L614.7,184.7 L613.7,182.8 L612.8,181.1 L612.1,179.7 L611.8,178.6Z" fill="#6e523e" filter="url(#b2)" opacity=".95"/>
<path d="M589.5,157.5 L597,159.5 L605,163.5 L612,169.5 L618,176 L634,189.5" stroke="#2e1e14" stroke-width="3" fill="none" stroke-linecap="round" filter="url(#b1)" opacity=".9"/>
<path d="M589,163 L590.8,173 L593.7,180 L596.8,186.3 L601.3,192.3 L606,196.3 L612.3,199.8 L622,204" stroke="#3a281c" stroke-width="1.8" fill="none" stroke-linecap="round" filter="url(#b1)" opacity=".85"/>
</g>
<path d="M572.9,130.2 L573.1,128.3 L573.1,126.4 L573.2,124.5 L573.3,122.6 L573.4,120.7 L573.5,118.8 L573.5,117.0 L573.7,115.2 L573.8,113.4 L573.9,111.7 L574.1,110.0 L574.3,108.4 L574.6,106.9 L574.8,105.3 L575.1,103.8 L575.5,102.3 L575.8,100.8 L576.2,99.4 L576.5,98.0 L576.9,96.6 L577.3,95.4 L577.8,94.1 L578.2,93.0 L578.6,91.9 L579.1,91.0 L579.5,90.1 L580.0,89.3 L580.5,88.5 L581.0,87.8 L581.6,87.1 L582.2,86.4 L582.7,85.8 L583.3,85.1 L583.9,84.4 L584.5,83.7 L585.1,83.1 L585.7,82.4 L586.2,81.8 L586.7,81.2 L587.2,80.6 L587.7,80.0 L588.2,79.4 L588.8,78.8 L589.3,78.3 L589.8,77.7 L590.3,77.1 L590.9,76.5 L591.4,75.9 L590.6,75.1 L590.0,75.5 L589.3,76.0 L588.7,76.4 L588.1,76.9 L587.4,77.3 L586.8,77.8 L586.2,78.3 L585.5,78.7 L584.9,79.2 L584.2,79.8 L583.5,80.4 L582.9,80.9 L582.2,81.5 L581.6,82.1 L580.9,82.7 L580.3,83.3 L579.6,83.9 L578.9,84.6 L578.1,85.3 L577.4,86.1 L576.7,87.0 L576.1,87.9 L575.4,89.0 L574.8,90.1 L574.2,91.3 L573.6,92.5 L573.1,93.8 L572.6,95.1 L572.0,96.5 L571.5,98.0 L571.1,99.5 L570.6,101.1 L570.2,102.6 L569.8,104.3 L569.4,105.9 L569.1,107.6 L568.8,109.3 L568.5,111.1 L568.3,112.9 L568.1,114.7 L568.0,116.6 L567.8,118.5 L567.7,120.4 L567.6,122.3 L567.5,124.2 L567.3,126.1 L567.2,128.0 L567.1,129.8Z" fill="url(#g7)" />
<path d="M571.8,130.1 L571.9,128.3 L572.0,126.4 L572.1,124.5 L572.2,122.6 L572.3,120.7 L572.3,118.8 L572.5,116.9 L572.6,115.1 L572.7,113.3 L572.9,111.6 L573.1,109.9 L573.3,108.3 L573.6,106.7 L573.9,105.1 L574.2,103.6 L574.5,102.0 L574.9,100.6 L575.3,99.1 L575.7,97.7 L576.1,96.4 L576.6,95.1 L577.0,93.8 L577.5,92.7 L577.9,91.6 L578.4,90.6 L578.9,89.7 L579.4,88.9 L580.0,88.1 L580.5,87.4 L581.1,86.7 L581.7,86.0 L582.3,85.4 L583.0,84.7 L583.6,84.1 L584.2,83.4 L584.8,82.7 L585.3,82.1 L585.9,81.5 L586.4,80.9 L587.0,80.3 L587.5,79.8 L588.1,79.2 L588.6,78.7 L589.2,78.1 L589.7,77.6 L590.3,77.1 L590.8,76.5 L591.4,75.9 L590.6,75.1 L590.0,75.6 L589.4,76.0 L588.8,76.5 L588.2,77.0 L587.6,77.5 L587.0,78.0 L586.3,78.5 L585.7,79.0 L585.1,79.5 L584.5,80.1 L583.8,80.7 L583.2,81.3 L582.6,81.9 L582.0,82.5 L581.3,83.1 L580.7,83.7 L580.0,84.3 L579.3,85.0 L578.6,85.7 L578.0,86.5 L577.3,87.4 L576.7,88.3 L576.1,89.3 L575.5,90.4 L574.9,91.6 L574.4,92.8 L573.9,94.1 L573.4,95.4 L572.9,96.8 L572.4,98.3 L572.0,99.8 L571.5,101.3 L571.1,102.9 L570.8,104.5 L570.4,106.1 L570.1,107.7 L569.8,109.4 L569.6,111.2 L569.4,113.0 L569.2,114.8 L569.1,116.7 L568.9,118.6 L568.8,120.5 L568.7,122.4 L568.6,124.3 L568.5,126.2 L568.4,128.0 L568.2,129.9Z" fill="url(#g8)" filter="url(#b1)" opacity=".92"/>
<path d="M582.9,126.5 L583.1,125.2 L583.3,123.8 L583.5,122.4 L583.8,121.1 L584.0,119.7 L584.2,118.3 L584.4,117.0 L584.6,115.7 L584.8,114.4 L585.0,113.1 L585.3,111.9 L585.6,110.7 L585.9,109.4 L586.2,108.2 L586.4,107.1 L586.7,105.9 L587.0,104.8 L587.4,103.7 L587.7,102.5 L588.1,101.4 L588.5,100.3 L588.9,99.2 L589.3,98.1 L589.8,97.0 L590.4,95.8 L591.0,94.7 L591.6,93.5 L592.3,92.3 L593.0,91.1 L593.8,89.8 L594.6,88.6 L595.4,87.3 L596.2,86.1 L596.9,84.8 L597.7,83.6 L598.5,82.3 L597.5,81.7 L596.6,82.7 L595.6,83.8 L594.6,84.9 L593.6,86.0 L592.6,87.1 L591.6,88.2 L590.6,89.3 L589.6,90.4 L588.7,91.5 L587.8,92.7 L587.0,93.8 L586.2,95.0 L585.5,96.2 L584.8,97.4 L584.3,98.6 L583.7,99.7 L583.2,100.9 L582.8,102.1 L582.3,103.3 L581.9,104.5 L581.5,105.7 L581.2,106.9 L580.8,108.1 L580.4,109.3 L580.1,110.6 L579.7,112.0 L579.4,113.3 L579.1,114.7 L578.9,116.0 L578.6,117.4 L578.3,118.8 L578.1,120.1 L577.9,121.5 L577.6,122.8 L577.4,124.1 L577.1,125.5Z" fill="url(#g9)" />
<path d="M581.7,126.3 L582.0,125.0 L582.2,123.6 L582.4,122.2 L582.6,120.9 L582.8,119.5 L583.1,118.2 L583.3,116.8 L583.5,115.5 L583.8,114.2 L584.0,112.9 L584.3,111.6 L584.6,110.4 L584.9,109.2 L585.2,108.0 L585.5,106.8 L585.8,105.6 L586.2,104.5 L586.5,103.4 L586.9,102.2 L587.3,101.1 L587.7,100.0 L588.1,98.9 L588.6,97.8 L589.2,96.6 L589.8,95.5 L590.4,94.3 L591.1,93.2 L591.9,92.0 L592.7,90.8 L593.5,89.6 L594.3,88.4 L595.2,87.2 L596.0,86.0 L596.9,84.8 L597.7,83.6 L598.5,82.4 L597.5,81.6 L596.6,82.8 L595.7,83.9 L594.8,85.0 L593.8,86.1 L592.8,87.3 L591.9,88.4 L591.0,89.5 L590.1,90.7 L589.2,91.8 L588.3,93.0 L587.6,94.2 L586.8,95.4 L586.2,96.6 L585.6,97.7 L585.0,98.9 L584.5,100.1 L584.1,101.2 L583.6,102.4 L583.2,103.6 L582.8,104.7 L582.5,105.9 L582.1,107.1 L581.8,108.3 L581.4,109.6 L581.1,110.9 L580.8,112.2 L580.5,113.5 L580.2,114.9 L579.9,116.2 L579.7,117.6 L579.5,119.0 L579.2,120.3 L579.0,121.7 L578.7,123.0 L578.5,124.4 L578.3,125.7Z" fill="url(#g10)" filter="url(#b1)" opacity=".92"/>
<path d="M614.0,142.9 L613.6,141.3 L613.1,139.6 L612.6,138.0 L612.2,136.4 L611.7,134.8 L611.2,133.3 L610.8,131.8 L610.4,130.3 L610.1,128.9 L609.8,127.5 L609.6,126.2 L609.4,124.9 L609.3,123.7 L609.3,122.3 L609.4,120.9 L609.5,119.5 L609.6,118.1 L609.8,116.7 L610.0,115.3 L610.2,113.9 L610.5,112.6 L610.7,111.3 L610.9,110.0 L611.1,108.8 L611.3,107.8 L611.5,106.8 L611.7,105.9 L612.0,105.0 L612.2,104.2 L612.4,103.4 L612.7,102.6 L612.9,101.8 L613.2,101.1 L613.4,100.3 L613.7,99.6 L613.9,98.8 L614.1,98.2 L614.2,97.5 L614.4,97.0 L614.5,96.4 L614.6,95.9 L614.8,95.4 L614.9,94.9 L615.0,94.4 L615.1,93.9 L615.3,93.3 L615.4,92.8 L615.5,92.3 L614.5,91.7 L614.1,92.2 L613.8,92.6 L613.4,93.0 L613.1,93.3 L612.7,93.7 L612.4,94.1 L612.0,94.5 L611.6,95.0 L611.3,95.5 L610.9,96.0 L610.5,96.6 L610.1,97.2 L609.7,97.8 L609.3,98.4 L608.9,99.0 L608.5,99.7 L608.0,100.5 L607.6,101.2 L607.1,102.1 L606.6,103.0 L606.2,103.9 L605.7,104.9 L605.3,106.0 L604.9,107.2 L604.5,108.3 L604.0,109.5 L603.6,110.8 L603.2,112.2 L602.7,113.7 L602.3,115.2 L601.9,116.7 L601.5,118.3 L601.2,119.9 L600.9,121.6 L600.7,123.3 L600.6,125.1 L600.6,126.8 L600.6,128.6 L600.8,130.3 L600.9,132.1 L601.2,133.8 L601.4,135.5 L601.7,137.1 L602.0,138.8 L602.3,140.4 L602.6,142.0 L602.8,143.5 L603.0,145.1Z" fill="url(#g11)" />
<path d="M611.3,143.5 L610.9,141.8 L610.5,140.2 L610.1,138.6 L609.7,137.0 L609.2,135.4 L608.8,133.8 L608.5,132.3 L608.1,130.7 L607.8,129.2 L607.6,127.8 L607.4,126.4 L607.3,125.0 L607.3,123.6 L607.3,122.2 L607.4,120.7 L607.6,119.2 L607.8,117.8 L608.0,116.4 L608.3,114.9 L608.6,113.5 L608.9,112.2 L609.2,110.9 L609.4,109.6 L609.7,108.5 L609.9,107.4 L610.2,106.4 L610.5,105.5 L610.8,104.6 L611.1,103.7 L611.4,102.9 L611.7,102.1 L612.0,101.4 L612.3,100.6 L612.6,99.9 L612.9,99.2 L613.1,98.5 L613.4,97.8 L613.6,97.2 L613.8,96.7 L614.0,96.2 L614.2,95.7 L614.4,95.2 L614.6,94.7 L614.7,94.2 L614.9,93.7 L615.1,93.3 L615.3,92.8 L615.5,92.3 L614.5,91.7 L614.2,92.2 L613.9,92.6 L613.6,93.1 L613.3,93.5 L613.1,93.9 L612.8,94.3 L612.5,94.8 L612.2,95.2 L611.9,95.8 L611.5,96.3 L611.2,96.9 L610.9,97.5 L610.5,98.1 L610.2,98.8 L609.8,99.5 L609.4,100.2 L609.0,100.9 L608.6,101.7 L608.2,102.5 L607.8,103.4 L607.4,104.4 L607.0,105.4 L606.7,106.4 L606.3,107.5 L605.9,108.7 L605.6,109.9 L605.2,111.2 L604.8,112.6 L604.4,114.0 L604.0,115.5 L603.7,117.0 L603.4,118.6 L603.1,120.2 L602.9,121.8 L602.8,123.4 L602.7,125.0 L602.7,126.7 L602.8,128.3 L603.0,130.0 L603.3,131.6 L603.5,133.3 L603.8,134.9 L604.2,136.6 L604.5,138.2 L604.9,139.8 L605.2,141.4 L605.5,143.0 L605.7,144.5Z" fill="url(#g12)" filter="url(#b1)" opacity=".92"/>
<path d="M566.2,146.2 L567.3,146.4 L568.4,146.6 L569.5,146.8 L570.6,146.9 L571.7,147.1 L572.8,147.3 L573.8,147.5 L574.9,147.6 L575.9,147.8 L577.0,148.0 L578.0,148.1 L579.0,148.3 L580.2,148.5 L581.3,148.6 L582.3,148.7 L583.2,148.8 L584.1,148.9 L584.9,149.0 L585.7,149.1 L586.6,149.2 L587.4,149.4 L588.3,149.6 L589.3,149.8 L590.5,150.1 L591.8,150.5 L593.3,150.9 L594.9,151.4 L596.5,151.9 L598.2,152.4 L599.9,153.0 L601.6,153.6 L603.3,154.2 L604.9,154.9 L606.4,155.5 L607.9,156.1 L609.2,156.8 L610.4,157.4 L611.7,158.1 L612.9,158.8 L614.0,159.6 L615.2,160.3 L616.3,161.2 L617.4,162.0 L618.5,162.8 L619.6,163.7 L620.7,164.7 L621.9,165.6 L623.0,166.5 L624.0,167.5 L625.1,168.4 L626.1,169.4 L627.2,170.5 L628.2,171.5 L629.2,172.6 L630.2,173.7 L631.2,174.8 L632.2,175.8 L633.1,176.9 L634.1,178.0 L634.9,179.1 L635.8,180.1 L636.5,181.1 L637.2,182.1 L637.9,183.1 L638.6,184.1 L639.3,185.1 L640.0,186.2 L640.7,187.2 L641.4,188.3 L642.1,189.4 L642.9,190.6 L643.6,191.7 L654.4,184.3 L653.6,183.3 L652.9,182.3 L652.3,181.2 L651.6,180.1 L650.8,179.1 L650.1,178.0 L649.4,176.8 L648.6,175.7 L647.8,174.5 L646.9,173.3 L646.0,172.1 L645.1,170.9 L644.1,169.8 L643.2,168.6 L642.2,167.4 L641.1,166.1 L640.1,164.9 L639.0,163.7 L637.9,162.4 L636.8,161.2 L635.6,160.0 L634.5,158.8 L633.2,157.6 L632.0,156.5 L630.8,155.4 L629.7,154.3 L628.5,153.2 L627.2,152.2 L626.0,151.1 L624.7,150.1 L623.3,149.1 L621.9,148.1 L620.5,147.1 L619.0,146.1 L617.4,145.2 L615.8,144.2 L614.1,143.3 L612.3,142.5 L610.4,141.6 L608.6,140.9 L606.7,140.1 L604.8,139.4 L602.9,138.7 L601.1,138.0 L599.3,137.4 L597.6,136.9 L596.0,136.4 L594.5,135.9 L593.1,135.5 L591.6,135.1 L590.3,134.8 L589.0,134.6 L587.8,134.4 L586.7,134.2 L585.6,134.1 L584.6,134.0 L583.7,133.9 L582.8,133.9 L581.9,133.8 L581.0,133.7 L579.9,133.6 L578.8,133.5 L577.6,133.4 L576.5,133.3 L575.4,133.2 L574.3,133.1 L573.2,133.1 L572.1,133.0 L571.0,133.0 L569.9,132.9 L568.8,132.8 L567.8,132.8Z" fill="url(#g13)" />
<path d="M574.1,141.4 L574.5,140.4 L574.9,139.4 L575.2,138.5 L575.5,137.7 L575.7,136.9 L575.9,136.3 L576.1,135.7 L576.3,135.1 L576.6,134.5 L576.9,133.9 L577.3,133.1 L577.9,132.3 L578.6,131.4 L579.4,130.3 L580.4,129.2 L581.5,128.0 L582.7,126.7 L583.9,125.4 L585.2,124.0 L586.6,122.6 L587.9,121.2 L589.3,119.8 L590.6,118.4 L592.0,116.9 L593.3,115.5 L594.7,114.1 L596.0,112.7 L597.4,111.2 L598.8,109.7 L600.2,108.3 L601.6,106.8 L603.0,105.3 L604.4,103.9 L605.8,102.4 L607.1,101.0 L608.5,99.6 L609.8,98.3 L611.1,96.8 L612.5,95.4 L613.9,93.9 L615.3,92.5 L616.7,91.1 L618.0,89.7 L619.3,88.3 L620.6,87.0 L621.8,85.7 L622.9,84.5 L623.9,83.4 L624.8,82.4 L625.6,81.4 L626.4,80.6 L627.0,79.8 L627.7,79.1 L628.2,78.4 L628.8,77.7 L629.3,77.0 L629.8,76.4 L630.3,75.7 L630.8,75.0 L631.4,74.3 L631.9,73.6 L632.4,72.9 L632.9,72.1 L633.4,71.4 L633.9,70.7 L634.4,70.0 L634.8,69.3 L635.3,68.7 L635.8,68.0 L636.2,67.3 L636.7,66.6 L637.1,65.9 L636.3,65.1 L635.6,65.7 L635.0,66.2 L634.4,66.8 L633.8,67.3 L633.1,67.9 L632.5,68.4 L631.9,69.0 L631.3,69.5 L630.6,70.0 L630.0,70.6 L629.3,71.1 L628.6,71.7 L628.0,72.2 L627.3,72.7 L626.7,73.2 L626.0,73.7 L625.4,74.2 L624.7,74.7 L624.0,75.2 L623.3,75.8 L622.4,76.4 L621.6,77.1 L620.6,77.8 L619.5,78.6 L618.3,79.5 L617.1,80.4 L615.7,81.5 L614.2,82.5 L612.7,83.6 L611.1,84.8 L609.5,86.0 L607.9,87.2 L606.3,88.5 L604.7,89.8 L603.1,91.1 L601.5,92.4 L600.0,93.7 L598.5,95.0 L597.0,96.4 L595.5,97.8 L594.1,99.2 L592.6,100.7 L591.1,102.1 L589.6,103.5 L588.2,105.0 L586.8,106.4 L585.4,107.7 L584.0,109.1 L582.6,110.4 L581.3,111.7 L579.8,113.0 L578.4,114.3 L577.0,115.7 L575.6,117.0 L574.2,118.3 L572.9,119.6 L571.6,120.9 L570.4,122.2 L569.2,123.4 L568.1,124.7 L567.1,125.9 L566.3,127.1 L565.5,128.3 L564.9,129.4 L564.3,130.4 L563.9,131.4 L563.5,132.3 L563.1,133.1 L562.8,133.8 L562.5,134.4 L562.2,134.9 L561.9,135.6Z" fill="url(#g15)" />
<circle cx="569.3" cy="138.3" r="6.6" fill="#2c1b10"/>
<circle cx="570.3" cy="137.8" r="3.6" fill="#8a6440" filter="url(#b1)"/>
<path d="M566.6,142.8 L567.7,143.0 L568.8,143.1 L569.9,143.3 L571.0,143.4 L572.1,143.6 L573.1,143.7 L574.2,143.8 L575.3,144.0 L576.4,144.1 L577.4,144.3 L578.5,144.4 L579.5,144.6 L580.6,144.7 L581.6,144.9 L582.6,145.0 L583.6,145.1 L584.5,145.1 L585.4,145.2 L586.3,145.4 L587.2,145.5 L588.2,145.7 L589.2,145.9 L590.3,146.1 L591.5,146.5 L592.9,146.9 L594.4,147.3 L596.0,147.8 L597.7,148.4 L599.4,148.9 L601.1,149.5 L602.9,150.2 L604.6,150.8 L606.3,151.5 L607.9,152.2 L609.5,152.9 L610.9,153.6 L612.2,154.3 L613.5,155.1 L614.8,155.8 L616.0,156.7 L617.2,157.5 L618.4,158.4 L619.6,159.2 L620.7,160.1 L621.9,161.1 L623.0,162.0 L624.1,163.0 L625.3,164.0 L626.4,165.0 L627.5,166.0 L628.5,167.1 L629.6,168.1 L630.7,169.2 L631.7,170.3 L632.7,171.5 L633.7,172.6 L634.7,173.7 L635.7,174.8 L636.6,175.9 L637.5,177.0 L638.3,178.1 L639.1,179.1 L639.9,180.2 L640.6,181.2 L641.3,182.2 L642.0,183.3 L642.7,184.4 L643.4,185.4 L644.1,186.5 L644.9,187.6 L645.6,188.7 L646.3,189.8 L651.7,186.2 L650.9,185.1 L650.2,184.1 L649.5,183.0 L648.8,181.9 L648.1,180.8 L647.4,179.8 L646.7,178.7 L645.9,177.5 L645.1,176.4 L644.3,175.3 L643.4,174.1 L642.5,173.0 L641.6,171.8 L640.6,170.7 L639.6,169.5 L638.6,168.3 L637.6,167.1 L636.5,165.9 L635.5,164.7 L634.4,163.5 L633.2,162.4 L632.1,161.2 L630.9,160.1 L629.7,159.0 L628.6,158.0 L627.4,156.9 L626.2,155.9 L625.0,154.9 L623.8,153.9 L622.5,152.9 L621.2,151.9 L619.9,151.0 L618.5,150.0 L617.1,149.1 L615.7,148.3 L614.1,147.4 L612.5,146.6 L610.8,145.8 L609.0,145.0 L607.2,144.3 L605.4,143.5 L603.5,142.8 L601.7,142.2 L599.9,141.6 L598.2,141.0 L596.5,140.4 L595.0,140.0 L593.5,139.5 L592.1,139.1 L590.8,138.8 L589.6,138.5 L588.4,138.3 L587.3,138.1 L586.2,138.0 L585.2,137.9 L584.3,137.8 L583.3,137.7 L582.4,137.6 L581.5,137.5 L580.5,137.4 L579.4,137.3 L578.3,137.2 L577.2,137.0 L576.1,136.9 L575.0,136.8 L573.9,136.7 L572.8,136.6 L571.7,136.6 L570.6,136.5 L569.5,136.4 L568.5,136.3 L567.4,136.2Z" fill="url(#g14)" filter="url(#b1)" opacity=".92"/>
<path d="M571.3,140.1 L571.7,139.2 L572.1,138.3 L572.4,137.4 L572.7,136.6 L572.9,135.9 L573.2,135.2 L573.4,134.5 L573.7,133.8 L574.1,133.1 L574.5,132.3 L575.0,131.5 L575.7,130.6 L576.5,129.6 L577.4,128.5 L578.4,127.3 L579.6,126.1 L580.8,124.8 L582.0,123.5 L583.4,122.1 L584.7,120.8 L586.1,119.4 L587.5,118.0 L588.9,116.6 L590.2,115.2 L591.5,113.8 L592.9,112.4 L594.3,110.9 L595.7,109.5 L597.1,108.0 L598.5,106.6 L599.9,105.1 L601.4,103.7 L602.8,102.2 L604.2,100.8 L605.6,99.4 L606.9,98.0 L608.3,96.7 L609.7,95.3 L611.2,93.9 L612.6,92.5 L614.0,91.1 L615.5,89.7 L616.9,88.4 L618.2,87.1 L619.5,85.8 L620.8,84.6 L621.9,83.5 L623.0,82.4 L624.0,81.5 L624.8,80.6 L625.6,79.8 L626.3,79.0 L627.0,78.3 L627.6,77.7 L628.1,77.0 L628.7,76.4 L629.2,75.8 L629.8,75.2 L630.3,74.5 L630.9,73.9 L631.5,73.2 L632.0,72.5 L632.6,71.8 L633.1,71.1 L633.6,70.5 L634.1,69.8 L634.6,69.2 L635.1,68.5 L635.6,67.9 L636.1,67.2 L636.6,66.6 L637.1,65.9 L636.3,65.1 L635.7,65.7 L635.1,66.3 L634.5,66.9 L633.9,67.5 L633.3,68.0 L632.8,68.6 L632.2,69.2 L631.6,69.8 L631.0,70.4 L630.4,71.0 L629.8,71.5 L629.1,72.1 L628.5,72.7 L627.8,73.3 L627.2,73.8 L626.6,74.3 L626.0,74.9 L625.4,75.4 L624.7,76.0 L624.0,76.6 L623.2,77.2 L622.4,77.9 L621.4,78.7 L620.4,79.6 L619.3,80.5 L618.0,81.5 L616.7,82.6 L615.3,83.7 L613.8,84.9 L612.3,86.1 L610.8,87.4 L609.2,88.7 L607.6,90.0 L606.1,91.3 L604.6,92.6 L603.1,94.0 L601.6,95.3 L600.1,96.7 L598.7,98.1 L597.2,99.5 L595.7,100.9 L594.3,102.4 L592.8,103.8 L591.4,105.2 L589.9,106.7 L588.5,108.1 L587.2,109.5 L585.8,110.8 L584.4,112.2 L583.1,113.5 L581.6,114.8 L580.2,116.2 L578.8,117.6 L577.5,118.9 L576.1,120.2 L574.8,121.5 L573.6,122.8 L572.4,124.0 L571.3,125.2 L570.3,126.4 L569.4,127.5 L568.7,128.6 L568.0,129.7 L567.5,130.7 L567.0,131.6 L566.6,132.5 L566.2,133.3 L565.9,134.1 L565.6,134.8 L565.3,135.5 L565.0,136.2 L564.7,136.9Z" fill="url(#g16)" filter="url(#b1)" opacity=".92"/>
<path d="M643.1,168.2 L643.6,167.3 L644.1,166.5 L644.6,165.6 L645.1,164.7 L645.6,163.9 L646.1,163.0 L646.6,162.2 L647.1,161.3 L647.7,160.4 L648.2,159.4 L648.7,158.5 L649.2,157.5 L649.7,156.5 L650.2,155.4 L650.8,154.4 L651.3,153.3 L651.8,152.2 L652.3,151.1 L652.9,149.9 L653.4,148.8 L653.9,147.7 L654.4,146.5 L655.0,145.4 L655.5,144.3 L654.5,143.7 L653.7,144.6 L652.9,145.5 L652.0,146.4 L651.2,147.4 L650.4,148.3 L649.5,149.2 L648.7,150.1 L647.9,151.0 L647.1,151.9 L646.3,152.8 L645.5,153.7 L644.8,154.5 L644.1,155.3 L643.4,156.1 L642.7,156.9 L642.0,157.7 L641.4,158.5 L640.7,159.2 L640.1,160.0 L639.5,160.7 L638.8,161.5 L638.2,162.3 L637.5,163.0 L636.9,163.8Z" fill="url(#g17)" />
<path d="M641.8,167.3 L642.4,166.4 L642.9,165.6 L643.4,164.7 L644.0,163.9 L644.5,163.1 L645.0,162.2 L645.6,161.4 L646.1,160.5 L646.7,159.7 L647.2,158.8 L647.8,157.9 L648.3,156.9 L648.9,155.9 L649.5,154.9 L650.1,153.9 L650.7,152.9 L651.3,151.8 L651.9,150.8 L652.5,149.7 L653.1,148.6 L653.7,147.5 L654.3,146.5 L654.9,145.4 L655.5,144.3 L654.5,143.7 L653.8,144.6 L653.0,145.6 L652.3,146.6 L651.5,147.5 L650.7,148.5 L650.0,149.5 L649.2,150.5 L648.5,151.4 L647.8,152.4 L647.0,153.3 L646.3,154.2 L645.7,155.1 L645.0,155.9 L644.3,156.8 L643.7,157.6 L643.1,158.4 L642.5,159.2 L641.8,160.0 L641.2,160.8 L640.6,161.6 L640.0,162.3 L639.4,163.1 L638.8,163.9 L638.2,164.7Z" fill="url(#g18)" filter="url(#b1)" opacity=".92"/>
<path d="M652.2,175.5 L652.5,174.9 L652.9,174.3 L653.2,173.7 L653.6,173.0 L654.0,172.4 L654.4,171.8 L654.7,171.1 L655.1,170.5 L655.5,169.9 L655.8,169.2 L656.2,168.6 L656.5,168.0 L656.8,167.4 L657.1,166.7 L657.3,166.1 L657.6,165.5 L657.8,164.9 L658.0,164.3 L658.3,163.7 L658.5,163.1 L658.7,162.5 L658.9,161.9 L659.2,161.3 L659.4,160.7 L658.6,160.3 L658.2,160.7 L657.8,161.2 L657.3,161.7 L656.9,162.2 L656.5,162.7 L656.1,163.1 L655.7,163.6 L655.2,164.1 L654.8,164.6 L654.4,165.0 L654.0,165.5 L653.5,166.0 L653.1,166.5 L652.6,167.0 L652.2,167.6 L651.7,168.1 L651.2,168.6 L650.8,169.2 L650.3,169.7 L649.8,170.2 L649.3,170.8 L648.8,171.4 L648.3,171.9 L647.8,172.5Z" fill="url(#g19)" />
<path d="M651.3,174.9 L651.7,174.3 L652.1,173.7 L652.5,173.1 L652.9,172.5 L653.3,171.9 L653.7,171.3 L654.1,170.7 L654.5,170.1 L654.9,169.5 L655.3,168.9 L655.6,168.3 L656.0,167.7 L656.3,167.1 L656.6,166.5 L656.9,165.9 L657.2,165.3 L657.5,164.7 L657.8,164.2 L658.1,163.6 L658.4,163.0 L658.6,162.5 L658.9,161.9 L659.2,161.3 L659.5,160.8 L658.5,160.2 L658.2,160.7 L657.8,161.2 L657.4,161.8 L657.1,162.3 L656.7,162.8 L656.3,163.3 L655.9,163.8 L655.6,164.3 L655.2,164.8 L654.8,165.3 L654.4,165.8 L654.0,166.3 L653.6,166.9 L653.2,167.4 L652.7,168.0 L652.3,168.5 L651.9,169.1 L651.4,169.6 L651.0,170.2 L650.5,170.8 L650.0,171.3 L649.6,171.9 L649.1,172.5 L648.7,173.1Z" fill="url(#g20)" filter="url(#b1)" opacity=".92"/>
<path d="M673.3,164.0 L672.7,163.2 L672.1,162.5 L671.5,161.7 L671.0,160.9 L670.4,160.1 L669.8,159.3 L669.2,158.6 L668.7,157.8 L668.1,157.0 L667.5,156.3 L666.9,155.5 L666.3,154.7 L665.7,153.9 L665.1,153.1 L664.4,152.3 L663.8,151.4 L663.1,150.6 L662.5,149.8 L661.8,148.9 L661.2,148.1 L660.5,147.2 L659.8,146.4 L659.2,145.6 L658.5,144.7 L657.5,145.3 L657.8,146.3 L658.2,147.3 L658.5,148.3 L658.8,149.3 L659.2,150.3 L659.5,151.4 L659.9,152.4 L660.2,153.4 L660.6,154.4 L660.9,155.4 L661.3,156.4 L661.7,157.3 L662.1,158.3 L662.5,159.2 L662.9,160.1 L663.3,161.0 L663.8,161.9 L664.2,162.8 L664.6,163.6 L665.0,164.5 L665.5,165.4 L665.9,166.2 L666.3,167.1 L666.7,168.0Z" fill="url(#g21)" />
<path d="M671.9,164.9 L671.4,164.0 L670.8,163.2 L670.3,162.4 L669.7,161.6 L669.2,160.8 L668.7,160.1 L668.1,159.3 L667.6,158.5 L667.1,157.6 L666.5,156.8 L666.0,156.0 L665.4,155.2 L664.9,154.4 L664.3,153.5 L663.7,152.6 L663.2,151.8 L662.6,150.9 L662.0,150.0 L661.4,149.1 L660.8,148.3 L660.3,147.4 L659.7,146.5 L659.1,145.6 L658.5,144.7 L657.5,145.3 L657.9,146.2 L658.3,147.2 L658.7,148.2 L659.2,149.2 L659.6,150.1 L660.0,151.1 L660.4,152.1 L660.8,153.0 L661.3,154.0 L661.7,154.9 L662.1,155.9 L662.6,156.8 L663.0,157.7 L663.5,158.6 L663.9,159.5 L664.4,160.4 L664.9,161.2 L665.3,162.1 L665.8,162.9 L666.3,163.8 L666.7,164.6 L667.2,165.4 L667.6,166.3 L668.1,167.1Z" fill="url(#g22)" filter="url(#b1)" opacity=".92"/>
<path d="M692.4,149.6 L692.3,148.0 L692.2,146.5 L692.1,145.0 L692.0,143.4 L692.0,141.8 L691.9,140.2 L691.8,138.5 L691.7,136.7 L691.5,134.9 L691.2,133.0 L690.9,131.1 L690.5,129.0 L690.0,126.8 L689.5,124.6 L688.8,122.3 L688.1,119.9 L687.4,117.5 L686.6,115.0 L685.9,112.6 L685.1,110.3 L684.3,108.0 L683.6,105.8 L682.9,103.8 L682.3,101.8 L681.7,100.1 L681.1,98.3 L680.5,96.7 L680.0,95.2 L679.4,93.7 L678.9,92.3 L678.4,90.9 L677.8,89.5 L677.3,88.2 L676.8,86.9 L676.3,85.6 L675.7,84.2 L675.2,82.9 L674.6,81.6 L674.1,80.4 L673.6,79.1 L673.0,77.9 L672.5,76.7 L672.0,75.5 L671.4,74.3 L670.9,73.1 L670.3,72.0 L669.8,70.8 L669.3,69.5 L668.1,69.9 L668.3,71.2 L668.5,72.5 L668.6,73.8 L668.8,75.1 L669.0,76.4 L669.1,77.7 L669.3,79.0 L669.5,80.3 L669.6,81.6 L669.8,83.0 L670.0,84.3 L670.3,85.8 L670.5,87.2 L670.7,88.6 L671.0,90.0 L671.2,91.4 L671.5,92.8 L671.8,94.3 L672.1,95.8 L672.4,97.3 L672.7,98.9 L673.0,100.5 L673.4,102.3 L673.7,104.2 L674.2,106.2 L674.6,108.3 L675.1,110.6 L675.7,112.9 L676.2,115.3 L676.8,117.7 L677.4,120.1 L677.9,122.5 L678.4,124.8 L678.8,127.0 L679.2,129.1 L679.5,131.0 L679.7,132.8 L679.9,134.4 L680.0,136.1 L680.2,137.6 L680.2,139.2 L680.3,140.7 L680.3,142.2 L680.4,143.8 L680.4,145.4 L680.5,147.0 L680.5,148.7 L680.6,150.4Z" fill="url(#g23)" />
<path d="M689.4,149.8 L689.3,148.2 L689.2,146.6 L689.2,145.1 L689.1,143.5 L689.1,141.9 L689.0,140.3 L688.9,138.7 L688.8,137.0 L688.6,135.2 L688.4,133.4 L688.1,131.5 L687.8,129.5 L687.3,127.4 L686.8,125.2 L686.2,122.9 L685.6,120.5 L684.9,118.1 L684.2,115.7 L683.5,113.3 L682.8,110.9 L682.1,108.6 L681.4,106.4 L680.8,104.3 L680.2,102.4 L679.7,100.6 L679.2,98.9 L678.6,97.2 L678.2,95.7 L677.7,94.2 L677.2,92.7 L676.8,91.3 L676.3,90.0 L675.9,88.6 L675.4,87.3 L675.0,85.9 L674.5,84.6 L674.1,83.2 L673.6,81.9 L673.2,80.6 L672.7,79.4 L672.3,78.1 L671.9,76.9 L671.4,75.7 L671.0,74.5 L670.6,73.2 L670.1,72.0 L669.7,70.8 L669.2,69.5 L668.2,69.9 L668.4,71.1 L668.7,72.4 L669.0,73.7 L669.2,74.9 L669.5,76.2 L669.8,77.5 L670.0,78.8 L670.3,80.0 L670.6,81.3 L670.9,82.7 L671.2,84.0 L671.5,85.4 L671.8,86.8 L672.1,88.2 L672.4,89.6 L672.8,91.0 L673.1,92.4 L673.4,93.8 L673.8,95.3 L674.2,96.8 L674.5,98.4 L674.9,100.0 L675.3,101.8 L675.8,103.6 L676.3,105.6 L676.8,107.7 L677.4,109.9 L678.0,112.3 L678.6,114.6 L679.2,117.1 L679.8,119.5 L680.4,121.9 L680.9,124.2 L681.4,126.4 L681.9,128.5 L682.2,130.5 L682.5,132.3 L682.7,134.1 L682.9,135.8 L683.0,137.4 L683.1,139.0 L683.2,140.6 L683.2,142.1 L683.3,143.7 L683.3,145.3 L683.4,146.9 L683.5,148.5 L683.6,150.2Z" fill="url(#g24)" filter="url(#b1)" opacity=".92"/>
<path d="M720.8,144.4 L721.0,142.1 L721.2,139.9 L721.4,137.5 L721.7,135.2 L721.9,132.8 L722.2,130.4 L722.4,128.0 L722.6,125.6 L722.7,123.2 L722.8,120.8 L722.9,118.5 L722.8,116.2 L722.7,114.0 L722.5,111.8 L722.2,109.7 L721.9,107.7 L721.5,105.7 L721.1,103.8 L720.7,101.9 L720.2,100.2 L719.8,98.5 L719.3,96.9 L718.9,95.4 L718.5,94.0 L718.0,92.6 L717.5,91.3 L717.0,90.1 L716.5,89.0 L716.0,87.9 L715.5,87.0 L715.0,86.1 L714.5,85.3 L714.0,84.5 L713.6,83.8 L713.2,83.1 L712.8,82.4 L712.4,81.7 L712.1,81.0 L711.8,80.4 L711.5,79.8 L711.2,79.2 L710.9,78.6 L710.6,78.1 L710.4,77.6 L710.1,77.0 L709.8,76.5 L709.6,75.9 L709.3,75.3 L708.1,75.7 L708.2,76.3 L708.3,76.9 L708.4,77.5 L708.4,78.1 L708.5,78.7 L708.6,79.3 L708.7,80.0 L708.7,80.6 L708.8,81.3 L708.9,82.0 L709.1,82.8 L709.2,83.6 L709.4,84.5 L709.6,85.4 L709.8,86.3 L710.0,87.2 L710.3,88.1 L710.5,89.0 L710.7,89.9 L710.9,90.9 L711.1,91.9 L711.3,93.0 L711.4,94.2 L711.5,95.4 L711.7,96.8 L711.8,98.4 L712.0,100.0 L712.2,101.6 L712.3,103.3 L712.5,105.0 L712.6,106.8 L712.6,108.6 L712.6,110.4 L712.5,112.2 L712.4,114.0 L712.2,115.8 L711.9,117.6 L711.5,119.5 L711.0,121.5 L710.5,123.6 L709.9,125.7 L709.2,127.9 L708.5,130.1 L707.9,132.4 L707.1,134.7 L706.5,137.0 L705.8,139.3 L705.2,141.6Z" fill="url(#g25)" />
<path d="M716.8,143.7 L717.1,141.4 L717.4,139.1 L717.8,136.8 L718.2,134.5 L718.5,132.1 L718.9,129.8 L719.2,127.4 L719.5,125.1 L719.8,122.8 L720.0,120.5 L720.1,118.3 L720.2,116.1 L720.2,114.0 L720.0,111.9 L719.9,109.9 L719.6,107.9 L719.3,106.0 L719.0,104.1 L718.7,102.2 L718.3,100.5 L717.9,98.8 L717.6,97.2 L717.2,95.7 L716.9,94.3 L716.5,93.0 L716.1,91.7 L715.7,90.5 L715.3,89.4 L714.8,88.4 L714.4,87.4 L714.0,86.5 L713.5,85.7 L713.1,84.9 L712.8,84.1 L712.4,83.4 L712.1,82.6 L711.8,81.9 L711.5,81.2 L711.3,80.5 L711.0,79.9 L710.8,79.3 L710.6,78.7 L710.3,78.2 L710.1,77.6 L709.9,77.1 L709.7,76.5 L709.5,75.9 L709.2,75.3 L708.2,75.7 L708.3,76.3 L708.4,76.9 L708.6,77.5 L708.7,78.1 L708.8,78.6 L708.9,79.2 L709.1,79.8 L709.2,80.5 L709.4,81.1 L709.5,81.8 L709.7,82.6 L709.9,83.4 L710.1,84.2 L710.4,85.1 L710.7,85.9 L711.0,86.8 L711.3,87.6 L711.6,88.5 L711.9,89.5 L712.2,90.5 L712.4,91.5 L712.7,92.6 L712.9,93.8 L713.1,95.1 L713.4,96.5 L713.6,98.0 L713.9,99.6 L714.1,101.3 L714.3,103.0 L714.5,104.7 L714.7,106.5 L714.9,108.4 L714.9,110.2 L715.0,112.1 L714.9,114.0 L714.8,115.9 L714.6,117.8 L714.3,119.8 L713.9,121.9 L713.5,124.1 L713.0,126.3 L712.5,128.5 L711.9,130.8 L711.4,133.1 L710.8,135.4 L710.2,137.7 L709.7,140.1 L709.2,142.3Z" fill="url(#g26)" filter="url(#b1)" opacity=".92"/>
<path d="M718.1,97.8 L718.3,97.2 L718.4,96.6 L718.6,95.9 L718.8,95.3 L719.0,94.7 L719.1,94.1 L719.3,93.5 L719.5,92.9 L719.6,92.3 L719.8,91.7 L719.9,91.1 L720.0,90.5 L720.1,89.9 L720.2,89.4 L720.3,88.8 L720.4,88.3 L720.4,87.8 L720.5,87.2 L720.5,86.7 L720.6,86.2 L720.6,85.7 L720.6,85.2 L720.7,84.7 L720.8,84.1 L719.8,83.9 L719.6,84.3 L719.4,84.8 L719.1,85.3 L718.9,85.7 L718.7,86.2 L718.4,86.6 L718.2,87.1 L718.0,87.6 L717.7,88.0 L717.5,88.5 L717.2,89.0 L717.0,89.5 L716.7,90.0 L716.5,90.5 L716.2,91.1 L716.0,91.6 L715.7,92.2 L715.5,92.8 L715.2,93.3 L714.9,93.9 L714.7,94.5 L714.4,95.1 L714.2,95.7 L713.9,96.2Z" fill="url(#g27)" />
<path d="M717.3,97.5 L717.5,96.9 L717.7,96.3 L717.9,95.7 L718.1,95.1 L718.3,94.5 L718.5,93.9 L718.7,93.3 L718.9,92.7 L719.1,92.1 L719.2,91.5 L719.4,90.9 L719.5,90.3 L719.7,89.8 L719.8,89.2 L719.9,88.7 L720.0,88.2 L720.1,87.7 L720.2,87.2 L720.3,86.7 L720.4,86.2 L720.5,85.7 L720.6,85.2 L720.7,84.7 L720.8,84.2 L719.8,83.8 L719.6,84.3 L719.4,84.8 L719.2,85.3 L719.0,85.8 L718.8,86.2 L718.6,86.7 L718.5,87.2 L718.3,87.7 L718.1,88.1 L717.9,88.6 L717.7,89.1 L717.5,89.7 L717.2,90.2 L717.0,90.7 L716.8,91.3 L716.6,91.8 L716.3,92.4 L716.1,93.0 L715.9,93.6 L715.6,94.2 L715.4,94.8 L715.1,95.4 L714.9,95.9 L714.7,96.5Z" fill="url(#g28)" filter="url(#b1)" opacity=".92"/>
<path d="M681.9,188.8 L681.5,186.9 L681.1,184.8 L680.6,182.8 L680.1,180.8 L679.6,178.9 L679.2,177.0 L678.8,175.3 L678.5,173.7 L678.3,172.2 L678.3,171.0 L678.3,170.0 L678.4,169.2 L678.5,168.6 L678.8,167.9 L679.2,167.2 L679.6,166.5 L680.2,165.8 L680.8,165.0 L681.6,164.3 L682.5,163.5 L683.4,162.6 L684.5,161.8 L685.5,160.9 L686.6,160.0 L687.6,159.2 L688.6,158.4 L689.5,157.7 L690.4,157.0 L691.3,156.4 L692.2,155.9 L693.1,155.4 L694.1,154.9 L695.1,154.5 L696.3,154.1 L697.5,153.7 L698.9,153.3 L700.4,153.1 L702.2,152.8 L704.3,152.6 L706.6,152.5 L708.9,152.4 L711.4,152.3 L713.9,152.2 L716.4,152.2 L718.8,152.2 L721.1,152.1 L723.3,152.1 L725.3,152.0 L727.1,151.9 L728.6,151.8 L730.1,151.8 L731.5,151.7 L732.8,151.7 L734.1,151.6 L735.3,151.6 L736.5,151.5 L737.7,151.4 L738.9,151.3 L740.0,151.1 L741.2,150.9 L742.3,150.6 L743.5,150.3 L744.5,149.9 L745.4,149.5 L746.2,149.0 L747.0,148.6 L747.6,148.2 L748.0,147.9 L748.4,147.6 L748.8,147.3 L749.0,147.1 L749.5,146.9 L744.5,136.1 L743.8,136.4 L743.1,136.7 L742.4,137.0 L741.9,137.3 L741.4,137.5 L741.0,137.6 L740.7,137.7 L740.4,137.8 L740.1,137.9 L739.8,138.0 L739.4,138.0 L738.8,138.1 L738.1,138.2 L737.4,138.3 L736.5,138.4 L735.6,138.4 L734.6,138.5 L733.5,138.6 L732.3,138.6 L731.0,138.7 L729.5,138.8 L728.0,138.8 L726.4,138.9 L724.7,139.0 L722.9,139.1 L720.8,139.2 L718.6,139.2 L716.2,139.2 L713.7,139.3 L711.1,139.3 L708.5,139.4 L705.9,139.5 L703.3,139.7 L700.8,139.9 L698.4,140.2 L696.1,140.7 L694.1,141.2 L692.2,141.7 L690.4,142.4 L688.7,143.1 L687.1,143.9 L685.7,144.7 L684.3,145.5 L683.0,146.4 L681.7,147.3 L680.6,148.2 L679.5,149.1 L678.4,150.0 L677.3,150.9 L676.2,151.8 L675.0,152.7 L673.8,153.8 L672.6,155.0 L671.3,156.2 L670.1,157.6 L669.0,159.1 L667.9,160.8 L667.0,162.6 L666.2,164.6 L665.6,166.8 L665.3,169.1 L665.3,171.3 L665.4,173.5 L665.7,175.7 L666.1,177.8 L666.5,179.9 L667.0,181.9 L667.5,183.9 L668.0,185.8 L668.4,187.7 L668.8,189.4 L669.1,191.2Z" fill="url(#g29)" />
<path d="M751.2,145.3 L751.4,144.8 L751.7,144.3 L752.0,143.8 L752.4,143.2 L752.9,142.5 L753.4,141.7 L754.0,140.8 L754.5,139.7 L755.1,138.6 L755.5,137.2 L755.8,135.8 L755.9,134.3 L755.9,132.9 L755.7,131.6 L755.5,130.3 L755.2,129.0 L754.9,127.8 L754.5,126.6 L754.1,125.4 L753.7,124.2 L753.2,123.0 L752.7,121.8 L752.2,120.6 L751.7,119.4 L751.2,118.0 L750.6,116.6 L749.9,115.0 L749.2,113.5 L748.5,111.9 L747.8,110.3 L747.0,108.8 L746.3,107.2 L745.6,105.7 L744.9,104.3 L744.2,102.9 L743.6,101.6 L743.0,100.4 L742.4,99.2 L741.8,98.0 L741.2,96.9 L740.7,95.8 L740.1,94.8 L739.6,93.8 L739.1,92.8 L738.6,91.8 L738.1,90.9 L737.6,90.0 L737.1,89.2 L736.6,88.4 L736.2,87.6 L735.8,87.0 L735.3,86.3 L734.9,85.7 L734.6,85.1 L734.2,84.6 L733.8,84.0 L733.4,83.5 L733.0,82.9 L732.6,82.4 L732.2,81.8 L731.2,82.2 L731.3,82.9 L731.4,83.6 L731.6,84.3 L731.7,84.9 L731.8,85.6 L731.9,86.2 L732.1,86.9 L732.2,87.6 L732.4,88.3 L732.5,89.1 L732.7,89.9 L732.9,90.8 L733.1,91.8 L733.4,92.7 L733.6,93.7 L733.9,94.8 L734.1,95.9 L734.4,97.0 L734.7,98.1 L735.0,99.3 L735.3,100.5 L735.7,101.8 L736.0,103.1 L736.4,104.4 L736.9,105.8 L737.3,107.3 L737.8,108.8 L738.4,110.4 L738.9,112.0 L739.4,113.7 L740.0,115.3 L740.5,116.9 L741.0,118.4 L741.5,119.9 L741.9,121.3 L742.3,122.6 L742.6,123.9 L743.0,125.2 L743.3,126.4 L743.7,127.5 L744.0,128.6 L744.2,129.6 L744.4,130.5 L744.6,131.4 L744.7,132.1 L744.7,132.7 L744.7,133.3 L744.7,133.7 L744.6,133.9 L744.6,134.1 L744.5,134.3 L744.3,134.6 L744.1,134.9 L743.8,135.4 L743.4,135.9 L743.0,136.5 L742.5,137.1 L741.9,137.9 L741.3,138.8 L740.8,139.7Z" fill="url(#g31)" />
<circle cx="747" cy="140.5" r="5.8" fill="#2c1b10"/>
<circle cx="746.6" cy="140.2" r="3" fill="#a07a4c" filter="url(#b1)"/>
<path d="M678.7,189.4 L678.3,187.5 L677.9,185.5 L677.4,183.5 L676.9,181.6 L676.5,179.6 L676.0,177.7 L675.6,175.9 L675.3,174.2 L675.1,172.5 L675.0,171.1 L675.0,169.7 L675.2,168.6 L675.4,167.6 L675.8,166.6 L676.3,165.6 L676.9,164.7 L677.6,163.7 L678.5,162.8 L679.3,161.9 L680.3,161.0 L681.3,160.1 L682.4,159.3 L683.5,158.4 L684.5,157.5 L685.6,156.6 L686.6,155.8 L687.6,155.1 L688.6,154.4 L689.5,153.7 L690.6,153.1 L691.6,152.5 L692.7,151.9 L693.9,151.4 L695.2,151.0 L696.7,150.5 L698.2,150.1 L699.9,149.8 L701.9,149.6 L704.0,149.4 L706.4,149.2 L708.8,149.1 L711.3,149.0 L713.9,149.0 L716.3,148.9 L718.8,148.9 L721.1,148.9 L723.2,148.8 L725.2,148.7 L726.9,148.6 L728.5,148.5 L730.0,148.5 L731.4,148.4 L732.7,148.4 L733.9,148.3 L735.1,148.3 L736.3,148.2 L737.4,148.1 L738.5,148.0 L739.5,147.8 L740.6,147.7 L741.6,147.4 L742.5,147.2 L743.4,146.9 L744.2,146.5 L744.9,146.2 L745.5,145.9 L746.0,145.5 L746.5,145.2 L746.9,144.9 L747.3,144.7 L747.7,144.4 L748.2,144.2 L745.8,138.8 L745.1,139.1 L744.5,139.4 L743.9,139.7 L743.4,139.9 L743.0,140.2 L742.5,140.4 L742.1,140.6 L741.7,140.7 L741.2,140.9 L740.7,141.1 L740.1,141.2 L739.4,141.3 L738.6,141.5 L737.7,141.6 L736.8,141.7 L735.8,141.7 L734.8,141.8 L733.6,141.9 L732.4,141.9 L731.1,142.0 L729.7,142.0 L728.2,142.1 L726.5,142.2 L724.8,142.3 L723.0,142.4 L720.9,142.4 L718.7,142.5 L716.2,142.5 L713.7,142.5 L711.2,142.6 L708.6,142.7 L706.0,142.8 L703.5,142.9 L701.1,143.2 L698.9,143.5 L696.8,143.9 L694.9,144.3 L693.2,144.8 L691.6,145.4 L690.1,146.1 L688.7,146.8 L687.3,147.5 L686.1,148.3 L684.9,149.1 L683.7,149.9 L682.6,150.8 L681.5,151.6 L680.5,152.5 L679.4,153.4 L678.3,154.3 L677.1,155.2 L676.0,156.2 L674.9,157.3 L673.7,158.4 L672.7,159.6 L671.7,161.0 L670.7,162.4 L670.0,163.9 L669.3,165.6 L668.8,167.4 L668.6,169.3 L668.6,171.2 L668.7,173.2 L668.9,175.2 L669.3,177.2 L669.7,179.1 L670.2,181.1 L670.7,183.1 L671.2,185.0 L671.6,186.9 L672.0,188.8 L672.3,190.6Z" fill="url(#g30)" filter="url(#b1)" opacity=".92"/>
<path d="M748.8,144.1 L749.2,143.5 L749.5,142.9 L749.9,142.3 L750.3,141.7 L750.8,141.0 L751.3,140.3 L751.8,139.5 L752.3,138.6 L752.7,137.6 L753.0,136.5 L753.3,135.4 L753.4,134.2 L753.4,133.0 L753.3,131.8 L753.1,130.7 L752.9,129.5 L752.6,128.4 L752.2,127.3 L751.8,126.1 L751.4,124.9 L751.0,123.8 L750.6,122.6 L750.1,121.4 L749.7,120.1 L749.2,118.7 L748.6,117.3 L748.0,115.8 L747.3,114.2 L746.7,112.6 L746.0,111.1 L745.3,109.5 L744.6,107.9 L743.9,106.4 L743.3,104.9 L742.6,103.5 L742.1,102.2 L741.5,100.9 L741.0,99.7 L740.5,98.6 L740.0,97.4 L739.5,96.3 L739.0,95.2 L738.5,94.2 L738.1,93.2 L737.6,92.2 L737.2,91.3 L736.7,90.3 L736.3,89.5 L735.9,88.7 L735.5,87.9 L735.2,87.2 L734.8,86.5 L734.5,85.9 L734.2,85.3 L733.9,84.7 L733.5,84.1 L733.2,83.6 L732.9,83.0 L732.6,82.4 L732.2,81.8 L731.2,82.2 L731.4,82.9 L731.6,83.6 L731.7,84.2 L731.9,84.8 L732.1,85.4 L732.3,86.1 L732.5,86.7 L732.7,87.4 L732.9,88.1 L733.2,88.9 L733.4,89.7 L733.7,90.5 L734.0,91.4 L734.3,92.4 L734.6,93.4 L734.9,94.4 L735.2,95.4 L735.6,96.5 L735.9,97.7 L736.3,98.8 L736.7,100.0 L737.1,101.2 L737.5,102.5 L737.9,103.8 L738.4,105.2 L738.9,106.6 L739.5,108.2 L740.1,109.7 L740.7,111.3 L741.2,112.9 L741.8,114.6 L742.4,116.1 L743.0,117.7 L743.5,119.2 L743.9,120.6 L744.3,121.9 L744.7,123.2 L745.1,124.4 L745.5,125.6 L745.9,126.8 L746.2,127.9 L746.5,128.9 L746.7,129.9 L746.9,130.8 L747.1,131.7 L747.2,132.5 L747.2,133.2 L747.2,133.8 L747.1,134.4 L747.0,134.8 L746.8,135.3 L746.6,135.7 L746.3,136.2 L746.0,136.8 L745.6,137.4 L745.1,138.0 L744.6,138.6 L744.1,139.4 L743.6,140.2 L743.2,140.9Z" fill="url(#g32)" filter="url(#b1)" opacity=".92"/>
<g mask="url(#mHead)">
<path d="M626,205 L630,197 L634,191 L641.7,189 L648,185.5 L653,183 L660,182 L666.7,182.5 L674,184 L680,188 L684,194 L686,200 L687.5,206 L688,211.7 L692,214 L696,217 L700,220 L702,225 L702.3,231 L701.7,237 L700.5,241.5 L700,244 L697,247 L693,248.3 L686,248.3 L680,247.8 L676,250 L673,254 L672,258 L660,262 L645,258 L630,245 L620,230 L618,220Z" fill="url(#g33)" />
<g clip-path="url(#c7)">
<path d="M632.0,193.0 L633.0,191.6 L634.5,190.0 L636.4,188.4 L638.5,186.6 L640.8,184.9 L643.2,183.4 L645.7,182.0 L648.0,181.0 L650.3,180.2 L652.8,179.6 L655.4,179.1 L658.0,178.8 L660.6,178.7 L663.2,178.6 L665.7,178.8 L668.0,179.0 L670.3,179.4 L672.5,180.0 L674.7,180.7 L676.9,181.5 L678.9,182.5 L680.8,183.5 L682.5,184.7 L684.0,186.0 L685.3,187.4 L686.3,189.0 L687.2,190.7 L688.0,192.6 L688.6,194.4 L689.2,196.3 L689.6,198.2 L690.0,200.0 L690.3,201.8 L690.6,203.8 L690.7,205.8 L690.8,207.8 L690.7,209.7 L690.6,211.4 L690.3,212.9 L690.0,214.0 L689.5,214.7 L688.9,215.1 L688.2,215.2 L687.4,215.1 L686.5,215.0 L685.6,214.8 L684.8,214.8 L684.0,215.0 L683.2,215.3 L682.5,215.7 L681.8,216.2 L681.0,216.7 L680.2,217.2 L679.5,217.8 L678.8,218.4 L678.0,219.0 L677.2,219.7 L676.5,220.6 L675.8,221.6 L675.0,222.6 L674.2,223.5 L673.5,224.2 L672.8,224.8 L672.0,225.0 L671.2,224.9 L670.5,224.6 L669.8,224.0 L669.0,223.3 L668.2,222.5 L667.5,221.6 L666.8,220.8 L666.0,220.0 L665.2,219.2 L664.5,218.4 L663.7,217.6 L662.9,216.7 L662.1,215.8 L661.4,214.9 L660.7,213.9 L660.0,213.0 L659.4,212.0 L658.9,211.0 L658.4,210.0 L658.0,208.9 L657.6,207.9 L657.1,206.8 L656.6,205.9 L656.0,205.0 L655.4,204.2 L654.7,203.3 L654.0,202.5 L653.2,201.8 L652.5,201.1 L651.7,200.5 L650.9,199.9 L650.0,199.5 L649.1,199.2 L648.1,199.0 L647.1,198.8 L646.0,198.8 L644.9,198.8 L643.9,198.8 L642.9,198.9 L642.0,199.0 L641.1,199.2 L640.3,199.6 L639.5,200.0 L638.8,200.5 L638.0,200.9 L637.3,201.1 L636.6,201.2 L636.0,201.0 L635.3,200.5 L634.4,199.8 L633.5,198.9 L632.6,197.9 L631.9,196.7 L631.5,195.5 L631.5,194.3Z" fill="#3c2818" filter="url(#b2)" opacity=".95"/>
<path d="M662.0,192.0 L662.8,191.1 L664.2,190.3 L666.0,189.6 L668.0,189.1 L670.2,188.7 L672.3,188.6 L674.3,188.6 L676.0,189.0 L677.5,189.7 L679.0,190.8 L680.5,192.1 L681.9,193.6 L683.2,195.3 L684.3,196.9 L685.3,198.5 L686.0,200.0 L686.5,201.4 L686.9,203.0 L687.2,204.6 L687.2,206.1 L687.2,207.6 L686.9,209.0 L686.5,210.1 L686.0,211.0 L685.2,211.7 L684.2,212.2 L682.9,212.5 L681.5,212.7 L680.0,212.7 L678.6,212.6 L677.2,212.4 L676.0,212.0 L674.9,211.5 L673.8,210.7 L672.8,209.8 L671.8,208.8 L670.8,207.7 L669.8,206.5 L668.9,205.3 L668.0,204.0 L667.0,202.6 L665.9,201.1 L664.7,199.4 L663.6,197.7 L662.7,196.0 L662.0,194.5 L661.8,193.1Z" fill="#56381f" filter="url(#b2)" opacity=".8"/>
<path d="M634.0,214.0 L634.8,213.7 L636.0,213.9 L637.4,214.7 L639.0,215.7 L640.7,216.9 L642.5,218.1 L644.3,219.2 L646.0,220.0 L647.7,220.6 L649.5,221.0 L651.4,221.5 L653.2,221.9 L655.1,222.3 L656.9,222.8 L658.5,223.3 L660.0,224.0 L661.4,224.8 L662.7,225.6 L664.0,226.6 L665.1,227.6 L666.1,228.6 L667.0,229.7 L667.6,230.8 L668.0,232.0 L668.2,233.3 L668.1,234.8 L667.9,236.4 L667.5,238.1 L666.9,239.6 L666.1,241.0 L665.2,242.2 L664.0,243.0 L662.5,243.5 L660.8,243.8 L658.7,243.9 L656.5,243.9 L654.2,243.6 L652.0,243.2 L649.9,242.7 L648.0,242.0 L646.2,241.1 L644.5,240.1 L642.8,238.9 L641.1,237.5 L639.6,236.0 L638.2,234.4 L637.0,232.7 L636.0,231.0 L635.2,229.0 L634.5,226.6 L633.9,224.1 L633.5,221.4 L633.3,219.0 L633.3,216.8 L633.5,215.1Z" fill="#a08464" filter="url(#b3)" opacity=".85"/>
<path d="M660.0,222.0 L661.0,222.0 L662.3,222.3 L663.8,222.9 L665.2,223.8 L666.7,224.8 L668.1,225.8 L669.2,226.9 L670.0,228.0 L670.5,229.1 L670.9,230.4 L671.1,231.8 L671.1,233.2 L671.0,234.7 L670.8,236.0 L670.5,237.1 L670.0,238.0 L669.4,238.7 L668.5,239.3 L667.5,239.8 L666.4,240.1 L665.2,240.3 L664.0,240.4 L663.0,240.3 L662.0,240.0 L661.1,239.5 L660.1,238.8 L659.2,237.8 L658.2,236.8 L657.4,235.6 L656.8,234.4 L656.3,233.2 L656.0,232.0 L656.0,230.7 L656.2,229.3 L656.5,227.7 L657.0,226.1 L657.6,224.7 L658.3,223.4 L659.1,222.5Z" fill="#7e5e40" filter="url(#b2)" opacity=".7"/>
<path d="M618.0,204.0 L619.4,201.7 L621.1,199.5 L623.0,197.6 L625.1,195.9 L627.2,194.7 L629.1,193.9 L630.8,193.6 L632.0,194.0 L632.9,195.1 L633.5,196.9 L634.0,199.3 L634.2,202.1 L634.4,205.2 L634.3,208.5 L634.2,211.8 L634.0,215.0 L633.7,218.5 L633.2,222.6 L632.7,227.1 L632.0,231.6 L631.2,235.8 L630.2,239.4 L629.2,242.3 L628.0,244.0 L626.5,244.6 L624.6,244.3 L622.5,243.2 L620.4,241.6 L618.3,239.5 L616.4,237.1 L614.9,234.5 L614.0,232.0 L613.6,229.1 L613.5,225.7 L613.7,221.9 L614.2,217.9 L615.0,213.9 L615.9,210.1 L616.9,206.7Z" fill="#6a4c36" filter="url(#b3)" opacity=".9"/>
<path d="M685.5,213.5 C680,217.5 676,224 674.6,231 L673.5,238.7" stroke="#d8ccbc" stroke-width="2.8" fill="none" stroke-linecap="round" filter="url(#b1)"/>
<path d="M679.0,220.0 L679.6,219.2 L680.3,218.4 L681.1,217.7 L681.9,217.0 L682.8,216.4 L683.6,215.9 L684.3,215.6 L685.0,215.5 L685.6,215.6 L686.1,215.8 L686.7,216.2 L687.2,216.8 L687.6,217.4 L688.0,218.2 L688.3,219.1 L688.5,220.0 L688.7,221.1 L688.7,222.4 L688.8,223.8 L688.7,225.3 L688.6,226.8 L688.5,228.3 L688.3,229.7 L688.0,231.0 L687.7,232.2 L687.3,233.4 L686.9,234.6 L686.4,235.7 L685.8,236.8 L685.3,237.7 L684.6,238.4 L684.0,239.0 L683.3,239.4 L682.4,239.7 L681.5,239.9 L680.5,239.9 L679.6,239.8 L678.8,239.5 L678.0,239.1 L677.5,238.5 L677.1,237.6 L676.9,236.5 L676.8,235.2 L676.7,233.7 L676.7,232.2 L676.8,230.7 L676.9,229.3 L677.0,228.0 L677.1,226.9 L677.2,225.7 L677.4,224.7 L677.6,223.6 L677.8,222.6 L678.2,221.7 L678.5,220.8Z" fill="#100b08" filter="url(#b1)"/>
<path d="M686.0,213.5 L686.5,213.3 L687.0,213.3 L687.7,213.4 L688.5,213.6 L689.4,213.8 L690.3,214.2 L691.1,214.6 L692.0,215.0 L692.9,215.5 L693.9,216.1 L694.9,216.7 L695.9,217.4 L697.0,218.2 L697.9,219.0 L698.8,219.7 L699.5,220.5 L700.1,221.2 L700.6,222.0 L701.0,222.8 L701.4,223.5 L701.7,224.3 L701.9,225.2 L702.1,226.1 L702.3,227.0 L702.4,228.0 L702.5,229.2 L702.5,230.4 L702.4,231.6 L702.4,232.8 L702.3,234.0 L702.1,235.0 L702.0,236.0 L701.9,236.9 L701.8,237.7 L701.7,238.4 L701.5,239.1 L701.3,239.7 L701.0,240.2 L700.6,240.7 L700.0,241.0 L699.2,241.2 L698.1,241.3 L696.9,241.3 L695.7,241.3 L694.4,241.1 L693.1,241.0 L692.0,240.7 L691.0,240.5 L690.2,240.2 L689.4,240.0 L688.7,239.6 L688.0,239.3 L687.5,238.8 L687.0,238.3 L686.7,237.7 L686.5,237.0 L686.5,236.1 L686.8,235.1 L687.2,234.0 L687.7,232.8 L688.2,231.6 L688.6,230.4 L688.9,229.2 L689.0,228.0 L688.9,226.9 L688.6,225.7 L688.1,224.5 L687.7,223.3 L687.1,222.1 L686.7,221.0 L686.3,220.0 L686.0,219.0 L685.8,218.1 L685.6,217.2 L685.5,216.4 L685.4,215.6 L685.4,214.9 L685.5,214.3 L685.7,213.8Z" fill="#2a2826" filter="url(#b1)"/>
<path d="M688.5,215.5 L689.0,215.4 L689.7,215.4 L690.5,215.5 L691.4,215.8 L692.4,216.2 L693.3,216.6 L694.2,217.0 L695.0,217.5 L695.8,218.0 L696.6,218.6 L697.4,219.3 L698.2,220.1 L699.0,220.8 L699.6,221.6 L700.1,222.3 L700.5,223.0 L700.7,223.7 L700.8,224.4 L700.8,225.2 L700.8,225.9 L700.6,226.6 L700.3,227.2 L699.9,227.7 L699.5,228.0 L698.9,228.2 L698.2,228.2 L697.4,228.1 L696.5,227.9 L695.5,227.6 L694.6,227.3 L693.8,226.9 L693.0,226.5 L692.3,226.0 L691.6,225.4 L691.0,224.7 L690.3,224.0 L689.8,223.2 L689.3,222.5 L688.8,221.7 L688.5,221.0 L688.2,220.3 L688.0,219.4 L687.9,218.6 L687.8,217.8 L687.8,217.0 L687.9,216.3 L688.2,215.8Z" fill="#86847e" filter="url(#b1)" opacity=".95"/>
<path d="M692.0,230.0 L692.7,229.5 L693.7,229.1 L694.9,228.9 L696.2,228.8 L697.6,228.9 L698.8,229.1 L699.8,229.5 L700.5,230.0 L701.0,230.8 L701.3,231.9 L701.5,233.3 L701.6,234.8 L701.5,236.2 L701.3,237.6 L701.0,238.7 L700.5,239.5 L699.8,240.0 L698.8,240.4 L697.6,240.6 L696.2,240.7 L694.9,240.6 L693.7,240.4 L692.7,240.0 L692.0,239.5 L691.5,238.7 L691.2,237.6 L691.0,236.2 L690.9,234.8 L691.0,233.3 L691.2,231.9 L691.5,230.8Z" fill="#141210" filter="url(#b1)" opacity=".9"/>
<path d="M681.6,238.5 L686.5,229.5" stroke="#cfc5bb" stroke-width="1.5" fill="none" stroke-linecap="round" filter="url(#b1)" opacity=".9"/>
<path d="M672.5,238.0 L672.9,237.7 L673.5,237.6 L674.4,237.7 L675.4,238.0 L676.5,238.3 L677.7,238.7 L678.9,239.0 L680.0,239.3 L681.1,239.5 L682.3,239.8 L683.5,240.0 L684.8,240.3 L686.1,240.6 L687.4,240.9 L688.7,241.1 L690.0,241.3 L691.4,241.4 L693.0,241.5 L694.6,241.6 L696.2,241.6 L697.7,241.7 L699.1,241.8 L700.2,242.0 L701.0,242.3 L701.5,242.8 L701.6,243.3 L701.6,244.0 L701.4,244.8 L701.1,245.5 L700.6,246.2 L700.1,246.8 L699.5,247.3 L698.9,247.7 L698.1,248.0 L697.1,248.3 L696.2,248.5 L695.1,248.6 L694.1,248.8 L693.0,248.9 L692.0,249.0 L691.0,249.1 L690.0,249.1 L689.0,249.1 L688.0,249.1 L687.0,249.1 L686.0,249.0 L685.0,248.9 L684.0,248.8 L683.0,248.7 L682.0,248.6 L681.0,248.5 L680.0,248.3 L679.0,248.1 L678.1,247.8 L677.3,247.4 L676.5,246.8 L675.8,246.0 L675.0,244.8 L674.2,243.6 L673.6,242.2 L673.0,240.9 L672.6,239.6 L672.4,238.7Z" fill="#d6ccc0" filter="url(#b1)"/>
<ellipse cx="645.2" cy="206" rx="8.8" ry="7" fill="#c0ae94" filter="url(#b1)" opacity=".95"/>
<ellipse cx="646.4" cy="208.2" rx="6.7" ry="5" fill="#120d0a" filter="url(#b1)"/>
<ellipse cx="644.5" cy="206.5" rx="1.3" ry="0.9" fill="#7a7068"/>
</g>
</g>
<g clip-path="url(#cHB)">
<path d="M640,240 C648,247 657,250 667,250 C672,249.5 675,248 677,246" stroke="#20150e" stroke-width="11" fill="none" stroke-linecap="round" filter="url(#b3)" opacity=".6"/>
<path d="M638,243 C646,250 656,253.5 667,253.5 C673,253 677,251 680,248.5" stroke="#160e09" stroke-width="5.5" fill="none" stroke-linecap="round" filter="url(#b2)" opacity=".9"/>
</g>
</g>
</svg>
</div>
<div class="btn" style="left:645.5px;top:487.5px;width:166.5px;height:25px"></div>
<div class="btn def" style="left:645.5px;top:524.5px;width:166.5px;height:26px"></div>
<div id="bar"></div>
<span class="t" id="t0" style="top:14.00px;left:15.30px;letter-spacing:0.113px;">Hunter:</span>
<span class="t" id="t1" style="top:14.00px;left:77.30px;letter-spacing:-0.583px;">Jan (GDL) Fun</span>
<span class="t" id="t2" style="top:31.00px;left:20.30px;letter-spacing:0.230px;">Trophy Info</span>
<span class="t" id="t3" style="top:53.00px;left:15.30px;letter-spacing:-0.390px;">Animal:</span>
<span class="t" id="t4" style="top:53.00px;left:77.30px;letter-spacing:-0.197px;">Whitetail buck</span>
<span class="t" id="t5" style="top:53.00px;left:199.30px;letter-spacing:0.064px;">Weight:</span>
<span class="t" id="t6" style="top:53.00px;right:522.50px;margin-right:0.311px;letter-spacing:-0.311px;">296 lb</span>
<span class="t" id="t7" style="top:74.50px;left:15.30px;letter-spacing:-0.337px;">Season:</span>
<span class="t" id="t8" style="top:74.50px;left:77.30px;letter-spacing:0.277px;">Rut</span>
<span class="t" id="t9" style="top:74.50px;left:199.30px;letter-spacing:-0.220px;">Distance:</span>
<span class="t" id="t10" style="top:74.50px;right:522.50px;margin-right:0.089px;letter-spacing:-0.089px;">248 yd</span>
<span class="t" id="t11" style="top:95.00px;left:15.30px;letter-spacing:-0.154px;">Location:</span>
<span class="t" id="t12" style="top:95.00px;left:77.30px;letter-spacing:-1.090px;">SPRINGFIELD TENNESSEE (BD00)</span>
<span class="t" id="t13" style="top:115.00px;left:15.30px;letter-spacing:-0.030px;">Weapon:</span>
<span class="t" id="t14" style="top:115.00px;left:77.30px;letter-spacing:-0.114px;">Autoloader + scope</span>
<span class="t" id="t15" style="top:133.50px;left:15.30px;letter-spacing:0.048px;">Action:</span>
<span class="t" id="t16" style="top:133.50px;left:77.30px;letter-spacing:-0.235px;">Autoloader Rifle</span>
<span class="t" id="t17" style="top:153.50px;left:15.30px;letter-spacing:-0.686px;">Ammo:</span>
<span class="t" id="t18" style="top:153.50px;left:77.30px;letter-spacing:-0.874px;">7mm Magnum</span>
<span class="t" id="t19" style="top:172.50px;left:15.30px;letter-spacing:-0.199px;">Scope:</span>
<span class="t" id="t20" style="top:172.50px;left:77.30px;letter-spacing:-0.164px;">4x12 rifle scope</span>
<span class="t" id="t21" style="top:192.00px;left:15.30px;letter-spacing:0.155px;">Difficulty:</span>
<span class="t" id="t22" style="top:192.00px;left:76.30px;letter-spacing:0.226px;">Expert</span>
<span class="t" id="t23" style="top:192.00px;left:136.80px;letter-spacing:-0.153px;">Ground Objects:</span>
<span class="t" id="t24" style="top:192.00px;left:245.30px;letter-spacing:0.009px;">Ultra</span>
<span class="t" id="t25" style="top:212.00px;left:15.30px;letter-spacing:-0.296px;">Exotic Equipment:</span>
<span class="t" id="t26" style="top:212.00px;left:136.80px;letter-spacing:-1.100px;">No</span>
<span class="t" id="t27" style="top:231.00px;left:15.30px;letter-spacing:0.220px;">Date:</span>
<span class="t" id="t28" style="top:231.00px;left:77.30px;letter-spacing:-0.044px;">09/16/2015 at 08:22:08 pm</span>
<span class="t" id="t29" style="top:250.75px;left:15.30px;letter-spacing:-0.104px;">Antler: 10-points (13) Non-Typical</span>
<span class="t" id="t30" style="top:270.75px;left:15.30px;letter-spacing:-0.079px;">Tip to tip distance:</span>
<span class="t" id="t31" style="top:270.75px;left:160.30px;letter-spacing:-0.246px;">13.796</span>
<span class="t" id="t32" style="top:291.00px;left:15.30px;letter-spacing:-0.238px;">Outside spread size:</span>
<span class="t" id="t33" style="top:291.00px;left:160.30px;letter-spacing:-0.246px;">26.658</span>
<span class="t" id="t34" style="top:312.00px;left:15.30px;letter-spacing:-0.202px;">Inside spread size:</span>
<span class="t" id="t35" style="top:312.00px;left:160.30px;letter-spacing:-0.246px;">24.127</span>
<span class="t" id="t36" style="top:332.50px;left:101.80px;letter-spacing:0.247px;">Left</span>
<span class="t" id="t37" style="top:332.50px;left:174.30px;letter-spacing:-0.022px;">Right</span>
<span class="t" id="t38" style="top:332.50px;left:248.05px;letter-spacing:0.700px;">Diff</span>
<span class="t" id="t39" style="top:485.00px;left:323.80px;letter-spacing:-0.785px;">FINAL SCORE:</span>
<span class="t" id="t40" style="top:485.00px;left:423.05px;letter-spacing:-0.043px;">205.355</span>
<span class="t" id="t41" style="top:485.00px;left:489.80px;letter-spacing:-0.330px;">World Record</span>
<span class="t" id="t42" style="top:507.50px;left:323.30px;letter-spacing:-0.522px;">Game Version:</span>
<span class="t" id="t43" style="top:507.50px;left:423.05px;letter-spacing:0.441px;">1.2</span>
<span class="t" id="t44" style="top:492.75px;left:689.05px;letter-spacing:-0.124px;">Load Trophy</span>
<span class="t" id="t45" style="top:529.75px;left:712.80px;letter-spacing:-0.842px;">EXIT</span>
<span class="t" id="t46" style="top:353.75px;left:19.60px;">F:</span>
<span class="t" id="t47" style="top:353.75px;right:677.00px;">29.148</span>
<span class="t" id="t48" style="top:353.75px;right:605.00px;">31.486</span>
<span class="t" id="t49" style="top:353.75px;right:532.50px;">2.339</span>
<span class="t" id="t50" style="top:370.00px;left:19.60px;">G1:</span>
<span class="t" id="t51" style="top:370.00px;right:677.00px;">4.951</span>
<span class="t" id="t52" style="top:370.00px;right:605.00px;">5.283</span>
<span class="t" id="t53" style="top:370.00px;right:532.50px;">0.332</span>
<span class="t" id="t54" style="top:386.25px;left:19.60px;">G2:</span>
<span class="t" id="t55" style="top:386.25px;right:677.00px;">13.289</span>
<span class="t" id="t56" style="top:386.25px;right:605.00px;">9.459</span>
<span class="t" id="t57" style="top:386.25px;right:532.50px;">3.830</span>
<span class="t" id="t58" style="top:402.50px;left:19.60px;">G3:</span>
<span class="t" id="t59" style="top:402.50px;right:677.00px;">10.901</span>
<span class="t" id="t60" style="top:402.50px;right:605.00px;">8.989</span>
<span class="t" id="t61" style="top:402.50px;right:532.50px;">1.912</span>
<span class="t" id="t62" style="top:418.75px;left:19.60px;">G4:</span>
<span class="t" id="t63" style="top:418.75px;right:677.00px;">8.603</span>
<span class="t" id="t64" style="top:418.75px;right:605.00px;">7.945</span>
<span class="t" id="t65" style="top:418.75px;right:532.50px;">0.658</span>
<span class="t" id="t66" style="top:435.00px;left:19.60px;">G5:</span>
<span class="t" id="t67" style="top:435.00px;right:677.00px;">0.000</span>
<span class="t" id="t68" style="top:435.00px;right:605.00px;">0.000</span>
<span class="t" id="t69" style="top:435.00px;right:532.50px;">0.000</span>
<span class="t" id="t70" style="top:451.25px;left:19.60px;">H1:</span>
<span class="t" id="t71" style="top:451.25px;right:677.00px;">6.111</span>
<span class="t" id="t72" style="top:451.25px;right:605.00px;">6.570</span>
<span class="t" id="t73" style="top:451.25px;right:532.50px;">0.460</span>
<span class="t" id="t74" style="top:467.50px;left:19.60px;">H2:</span>
<span class="t" id="t75" style="top:467.50px;right:677.00px;">7.039</span>
<span class="t" id="t76" style="top:467.50px;right:605.00px;">7.572</span>
<span class="t" id="t77" style="top:467.50px;right:532.50px;">0.533</span>
<span class="t" id="t78" style="top:483.75px;left:19.60px;">H3:</span>
<span class="t" id="t79" style="top:483.75px;right:677.00px;">7.016</span>
<span class="t" id="t80" style="top:483.75px;right:605.00px;">7.551</span>
<span class="t" id="t81" style="top:483.75px;right:532.50px;">0.536</span>
<span class="t" id="t82" style="top:500.00px;left:19.60px;">H4:</span>
<span class="t" id="t83" style="top:500.00px;right:677.00px;">5.369</span>
<span class="t" id="t84" style="top:500.00px;right:605.00px;">5.772</span>
<span class="t" id="t85" style="top:500.00px;right:532.50px;">0.403</span>
<span class="t" id="t86" style="top:516.25px;left:19.60px;">Totals:</span>
<span class="t" id="t87" style="top:516.25px;right:677.00px;">92.428</span>
<span class="t" id="t88" style="top:516.25px;right:605.00px;">90.628</span>
<span class="t" id="t89" style="top:516.25px;right:532.50px;">11.002</span>
<span class="t" id="t90" style="top:532.50px;left:19.60px;">Abnorm:</span>
<span class="t" id="t91" style="top:532.50px;right:677.00px;">2.690</span>
<span class="t" id="t92" style="top:532.50px;right:605.00px;">6.484</span>
<span class="t" id="t93" style="top:532.50px;right:532.50px;">-</span>
</div>
</body></html>
